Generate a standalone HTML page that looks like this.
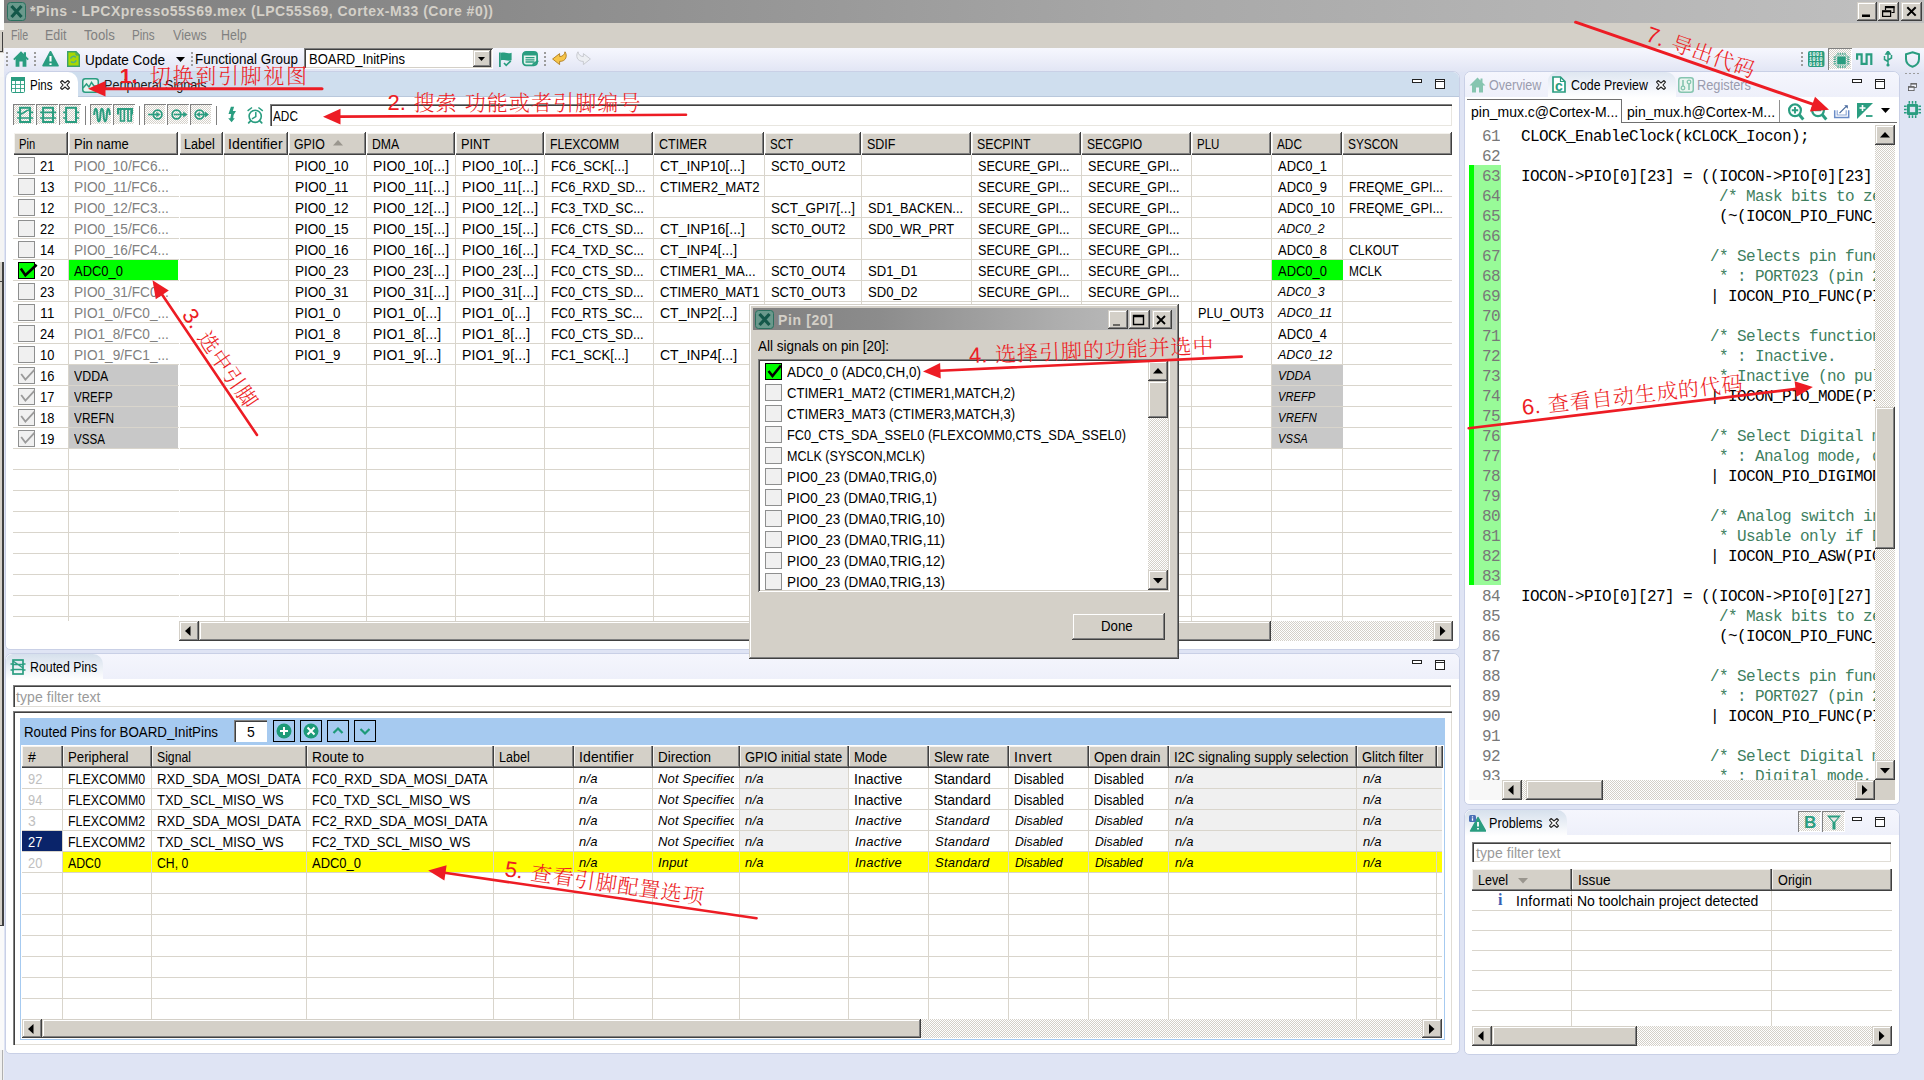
<!DOCTYPE html>
<html lang="zh"><head><meta charset="utf-8"><title>Pins - LPCXpresso55S69.mex</title>
<style>
html,body{margin:0;padding:0}
body{width:1924px;height:1080px;overflow:hidden;background:#dfe4f4;position:relative;font-family:"Liberation Sans","Noto Sans CJK SC",sans-serif;font-size:14px;color:#000}
div,span,svg{position:absolute;box-sizing:border-box}
.t{white-space:pre;line-height:16px}
.m{white-space:pre;font-family:"Liberation Mono",monospace;font-size:16px;letter-spacing:-0.6px;line-height:20px}
.hd{background:#d4d0c8;box-shadow:inset -1px -1px 0 #404040,inset -2px -2px 0 #808080,inset 1px 1px 0 #f4f2ee}
.btn{background:#d4d0c8;box-shadow:inset -1px -1px 0 #404040,inset 1px 1px 0 #d4d0c8,inset -2px -2px 0 #808080,inset 2px 2px 0 #fff}
.trk{background:repeating-conic-gradient(#fff 0% 25%,#d4d0c8 0% 50%) 0 0/2px 2px}
.sunk{box-shadow:inset 1px 1px 0 #808080,inset -1px -1px 0 #fff,inset 2px 2px 0 #404040,inset -2px -2px 0 #d4d0c8;background:#fff}
.cb{width:16px;height:16px;background:#f0f0f0;border:1px solid #8e8f8f}
.red{color:#ed1c24;font-family:"Liberation Sans","Noto Serif CJK SC",serif;white-space:pre}
</style></head>
<body>
<div style="left:0px;top:0px;width:4px;height:1080px;background:#ececec"></div>
<div style="left:0px;top:0px;width:4px;height:30px;background:#fff"></div>
<div style="left:0px;top:30px;width:4px;height:23px;background:#d4d0c8"></div>
<div style="left:2px;top:32px;width:1px;height:19px;background:#404040"></div>
<div style="left:0px;top:51px;width:3px;height:1px;background:#404040"></div>
<div style="left:0px;top:53px;width:4px;height:24px;background:#f6f6f6"></div>
<div style="left:0px;top:77px;width:4px;height:185px;background:#f4f4f4"></div>
<div style="left:0px;top:262px;width:4px;height:664px;background:#d4d0c8"></div>
<div style="left:2px;top:262px;width:2px;height:664px;background:#404040"></div>
<div style="left:0px;top:281px;width:4px;height:1px;background:#404040"></div>
<div style="left:0px;top:925px;width:4px;height:1px;background:#404040"></div>
<div style="left:0px;top:926px;width:4px;height:124px;background:#fafafa"></div>
<div style="left:0px;top:1050px;width:4px;height:30px;background:#f0f0f0"></div>
<div style="left:2px;top:1050px;width:1px;height:30px;background:#b0b0b0"></div>
<div style="left:4px;top:0px;width:1920px;height:23px;background:linear-gradient(to right,#808080 0%,#8a8a8a 25%,#a8a8a8 60%,#c0c0c0 100%)"></div>
<svg style="left:7px;top:2px" width="19" height="19" viewBox="0 0 19 19"><rect x="0.5" y="0.5" width="18" height="18" rx="3" fill="#6a998c" stroke="#2b705f"/><path d="M4.5 4 L14.5 15 M14.5 4 L4.5 15" stroke="#14584a" stroke-width="3.2" fill="none"/></svg>
<span class="t" style="left:30px;top:3px;color:#d4d0c8;font-weight:bold;letter-spacing:0.502px;">*Pins - LPCXpresso55S69.mex (LPC55S69, Cortex-M33 (Core #0))</span>
<div class="btn" style="left:1857px;top:2px;width:20px;height:19px;"></div>
<div class="btn" style="left:1878px;top:2px;width:21px;height:19px;"></div>
<div class="btn" style="left:1901px;top:2px;width:21px;height:19px;"></div>
<svg style="left:1857px;top:2px" width="66" height="19" viewBox="1857 2 66 19"><rect x="1862" y="14.5" width="8" height="2.5" fill="#000"/><path d="M1885.5 10V6.5h8.5v6h-2.5" stroke="#000" fill="none" stroke-width="1.2"/><path d="M1885 7.3h9.5" stroke="#000" stroke-width="1.8"/><rect x="1882.6" y="11" width="8" height="5.4" stroke="#000" fill="none" stroke-width="1.2"/><path d="M1882 11.4h9.2" stroke="#000" stroke-width="1.8"/><path d="M1907.3 7.2l8.4 8.4M1915.7 7.2l-8.4 8.4" stroke="#000" stroke-width="2" fill="none"/></svg>
<div style="left:4px;top:23px;width:1920px;height:25px;background:#d4d0c8"></div>
<span class="t" style="left:11px;top:27px;color:#808080;transform-origin:0 50%;transform:scaleX(0.7577);">File</span>
<span class="t" style="left:45px;top:27px;color:#808080;transform-origin:0 50%;transform:scaleX(0.8867);">Edit</span>
<span class="t" style="left:84px;top:27px;color:#808080;transform-origin:0 50%;transform:scaleX(0.9429);">Tools</span>
<span class="t" style="left:132px;top:27px;color:#808080;transform-origin:0 50%;transform:scaleX(0.8331);">Pins</span>
<span class="t" style="left:173px;top:27px;color:#808080;transform-origin:0 50%;transform:scaleX(0.9081);">Views</span>
<span class="t" style="left:221px;top:27px;color:#808080;transform-origin:0 50%;transform:scaleX(0.8890);">Help</span>
<div style="left:4px;top:48px;width:1920px;height:24px;background:linear-gradient(to bottom,#f6f7fe 0%,#eceef9 50%,#e1e5f4 100%)"></div>
<div style="left:6px;top:52px;width:2px;height:16px;background:repeating-linear-gradient(to bottom,#9c9c9c 0 2px,transparent 2px 4px)"></div>
<div style="left:34px;top:52px;width:2px;height:16px;background:repeating-linear-gradient(to bottom,#9c9c9c 0 2px,transparent 2px 4px)"></div>
<div style="left:191px;top:52px;width:2px;height:16px;background:repeating-linear-gradient(to bottom,#9c9c9c 0 2px,transparent 2px 4px)"></div>
<div style="left:1801px;top:52px;width:2px;height:16px;background:repeating-linear-gradient(to bottom,#9c9c9c 0 2px,transparent 2px 4px)"></div>
<span class="t" style="left:85px;top:52px;transform-origin:0 50%;transform:scaleX(0.9697);">Update Code</span>
<svg style="left:176px;top:57px" width="10" height="6"><path d="M0 0h9l-4.5 5z" fill="#000"/></svg>
<span class="t" style="left:195px;top:51px;transform-origin:0 50%;transform:scaleX(0.9593);">Functional Group</span>
<div class="sunk" style="left:304px;top:48px;width:189px;height:21px;"></div>
<span class="t" style="left:309px;top:51px;transform-origin:0 50%;transform:scaleX(0.9275);">BOARD_InitPins</span>
<div class="btn" style="left:473px;top:50px;width:18px;height:17px;"></div>
<svg style="left:478px;top:57px" width="8" height="5"><path d="M0 0h7l-3.5 4z" fill="#000"/></svg>
<svg style="left:13px;top:51px" width="16" height="16" viewBox="0 0 16 16"><path d="M8 0.3 L0.2 8 L1.4 9.2 L2.6 8 V15.8 H6.4 V10.5 H9.6 V15.8 H13.4 V8 L14.6 9.2 L15.8 8 L13 5.2 V1.3 H10.8 V3.1Z" fill="#2a9d80"/></svg>
<svg style="left:42px;top:51px" width="17" height="16" viewBox="0 0 17 16"><path d="M8.5 1 L15.8 14.6 H1.2Z" fill="#2a9d80" stroke="#2a9d80" stroke-width="2" stroke-linejoin="round"/><path d="M8.5 5v5.4M8.5 12.2v1.9" stroke="#fff" stroke-width="2.1"/></svg>
<svg style="left:67px;top:51px" width="13" height="16" viewBox="0 0 13 16"><path d="M0.7 0.7h8.3l3.3 3.3v11.3h-11.6z" fill="#a8d800" stroke="#3aa06e" stroke-width="1.4"/><path d="M9 0.7v3.3h3.3" fill="none" stroke="#3aa06e" stroke-width="1"/><path d="M3.6 7.6a3 3 0 0 1 5.2-1.2M9.2 9.2a3 3 0 0 1-5.2 1.2" stroke="#4fae86" stroke-width="1.5" fill="none"/></svg>
<svg style="left:499px;top:52px" width="13" height="15" viewBox="0 0 13 15"><path d="M0 0.5h1.8v14.5h-1.8z" fill="#2a9d80"/><path d="M1.8 1 C5 -0.3,8 2.3,12.6 0.8 V8.2 C8 9.7,5 7.1,1.8 8.4Z" fill="#2a9d80"/><path d="M5 11 L7.2 13.3 L11.8 8.8" stroke="#2a9d80" stroke-width="1.7" fill="none"/></svg>
<svg style="left:522px;top:51px" width="17" height="16" viewBox="0 0 17 16"><rect x="0.9" y="0.9" width="14.2" height="13.4" rx="3.2" fill="#e6f3ee" stroke="#2a9d80" stroke-width="1.8"/><rect x="1" y="1" width="14" height="3.4" rx="1.5" fill="#2a9d80"/><path d="M3.5 6.6h9M3.5 8.8h9M3.5 11h9" stroke="#2a9d80" stroke-width="1.3"/><path d="M9.5 15.2l1.2-2.8 5-3.6 1 1.6-5 3.8z" fill="#2a9d80"/></svg>
<div style="left:544px;top:52px;width:2px;height:16px;background:repeating-linear-gradient(to bottom,#9c9c9c 0 2px,transparent 2px 4px)"></div>
<svg style="left:552px;top:51px" width="16" height="15" viewBox="0 0 16 15"><path d="M0.6 8 L7.6 2.6 V5.6 C10.8 5.4,12.6 3.6,13 0.8 C15.6 4.6,14.2 10.6,7.6 10.4 V13.6Z" fill="#f7c64a" stroke="#b07c1c" stroke-width="0.9" stroke-linejoin="round"/></svg>
<svg style="left:575px;top:51px" width="16" height="15" viewBox="0 0 16 15"><path d="M15.4 8 L8.4 2.6 V5.6 C5.2 5.4,3.4 3.6,3 0.8 C0.4 4.6,1.8 10.6,8.4 10.4 V13.6Z" fill="#eceef2" stroke="#c4c6cc" stroke-width="0.9" stroke-linejoin="round"/></svg>
<div style="left:5px;top:71px;width:1455px;height:579px;background:#fff;border:1px solid #c9d0e6;border-radius:7px 7px 5px 5px;overflow:hidden"><div style="left:0;top:0;width:1455px;height:25px;background:#cfdeee;border-bottom:1px solid #b9c8dc"></div><div style="left:0px;top:0px;width:72px;height:26px;background:#fff;border-radius:7px 10px 0 0"></div></div>
<svg style="left:11px;top:77px" width="14" height="16" viewBox="0 0 14 16"><rect x="0.5" y="0.5" width="13" height="15" rx="1" fill="#fff" stroke="#2a9d80"/><rect x="0" y="0" width="14" height="4" fill="#2a9d80"/><path d="M0.5 7.5h13M0.5 11.5h13M4.5 4v12M9.5 4v12" stroke="#2a9d80" stroke-width="1" fill="none" opacity=".85"/></svg>
<span class="t" style="left:30px;top:77px;transform-origin:0 50%;transform:scaleX(0.8257);">Pins</span>
<svg style="left:60px;top:80px" width="10" height="10" viewBox="0 0 10 10"><path d="M2.1 0.5 L5 3 L7.9 0.5 L9.5 2.1 L7 5 L9.5 7.9 L7.9 9.5 L5 7 L2.1 9.5 L0.5 7.9 L3 5 L0.5 2.1Z" fill="#fff" stroke="#222" stroke-width="1.1"/></svg>
<svg style="left:82px;top:78px" width="17" height="15" viewBox="0 0 17 15"><rect x="0.75" y="0.75" width="15.5" height="13.5" rx="2.5" fill="#e8f3ee" stroke="#2a9d80" stroke-width="1.5"/><path d="M1 10 L4.5 6 L7 9 L9.5 4.5 L12 8 L16 8" stroke="#2a9d80" stroke-width="1.5" fill="none"/></svg>
<span class="t" style="left:104px;top:77px;color:#202020;transform-origin:0 50%;transform:scaleX(0.9021);">Peripheral Signals</span>
<svg style="left:1412px;top:78px" width="40" height="14" viewBox="0 0 40 14"><rect x="0.5" y="1.5" width="9" height="3" fill="#fff" stroke="#222"/><rect x="23.5" y="1.5" width="9" height="9" fill="#fff" stroke="#222"/><path d="M23 3.5h10" stroke="#222"/></svg>
<div class="trk" style="left:13px;top:104px;width:22px;height:21px;box-shadow:inset 1px 1px 0 #808080,inset -1px -1px 0 #fff"></div>
<div class="trk" style="left:36px;top:104px;width:22px;height:21px;box-shadow:inset 1px 1px 0 #808080,inset -1px -1px 0 #fff"></div>
<div class="trk" style="left:59px;top:104px;width:22px;height:21px;box-shadow:inset 1px 1px 0 #808080,inset -1px -1px 0 #fff"></div>
<div class="trk" style="left:90px;top:104px;width:22px;height:21px;box-shadow:inset 1px 1px 0 #808080,inset -1px -1px 0 #fff"></div>
<div class="trk" style="left:113px;top:104px;width:22px;height:21px;box-shadow:inset 1px 1px 0 #808080,inset -1px -1px 0 #fff"></div>
<div class="trk" style="left:144px;top:104px;width:22px;height:21px;box-shadow:inset 1px 1px 0 #808080,inset -1px -1px 0 #fff"></div>
<div class="trk" style="left:167px;top:104px;width:22px;height:21px;box-shadow:inset 1px 1px 0 #808080,inset -1px -1px 0 #fff"></div>
<div class="trk" style="left:190px;top:104px;width:22px;height:21px;box-shadow:inset 1px 1px 0 #808080,inset -1px -1px 0 #fff"></div>
<div style="left:85px;top:106px;width:1px;height:19px;background:#808080"></div>
<div style="left:139px;top:106px;width:1px;height:19px;background:#808080"></div>
<div style="left:216px;top:106px;width:1px;height:19px;background:#808080"></div>
<svg style="left:10px;top:100px" width="260" height="30" viewBox="10 100 260 30"><rect x="20.1" y="107.8" width="9.9" height="14.2" fill="none" stroke="#2a9d80" stroke-width="2"/><path d="M17.1 112.4h2.5M17.1 118h2.5M30.6 112.4h2.5M30.6 118h2.5" stroke="#2a9d80" stroke-width="1.6"/><path d="M20 118h10M20.3 114.2 C24 113.5,26 110,29.8 109.8" stroke="#2a9d80" stroke-width="1.6" fill="none"/><rect x="43.1" y="107.8" width="9.9" height="14.2" fill="none" stroke="#2a9d80" stroke-width="2"/><path d="M40.1 112.4h2.5M40.1 118h2.5M53.6 112.4h2.5M53.6 118h2.5" stroke="#2a9d80" stroke-width="1.6"/><path d="M43 112.4h10M43 118h10" stroke="#2a9d80" stroke-width="1.7"/><rect x="66.1" y="107.8" width="9.9" height="14.2" fill="none" stroke="#2a9d80" stroke-width="2"/><path d="M63.1 112.4h2.5M63.1 118h2.5M76.6 112.4h2.5M76.6 118h2.5" stroke="#2a9d80" stroke-width="1.6"/><path d="M94.2 115 C94.6 106.5,97 106.5,97.35 115 C97.7 123.5,100.1 123.5,100.4 115 C100.7 106.5,103.1 106.5,103.6 115 C104 123.5,106.4 123.5,106.8 115 C107.2 106.5,109.4 106.5,109.8 115" stroke="#2a9d80" stroke-width="2" fill="none"/><path d="M117 108h16v6.5h-2.2v-4.5h-11.6v4.5h-2.2z" fill="#2a9d80"/><path d="M120.6 109.5V121h3.7V109.5M128 109.5V121h3.2V110" stroke="#2a9d80" stroke-width="1.7" fill="none"/><circle cx="157.6" cy="114.5" r="4.3" fill="none" stroke="#2a9d80" stroke-width="1.8"/><path d="M148.1 114.5h9" stroke="#2a9d80" stroke-width="1.6"/><path d="M156.3 111.7l4 2.8l-4 2.8z" fill="#2a9d80"/><circle cx="176.5" cy="114.5" r="4.3" fill="none" stroke="#2a9d80" stroke-width="1.8"/><path d="M174 114.5h10" stroke="#2a9d80" stroke-width="1.6"/><path d="M183.2 111.5l4.2 3l-4.2 3z" fill="#2a9d80"/><circle cx="199.5" cy="114.5" r="4.3" fill="none" stroke="#2a9d80" stroke-width="1.8"/><path d="M198.5 114.5h7" stroke="#2a9d80" stroke-width="1.6"/><path d="M199.9 111.9l-3.8 2.6l3.8 2.6zM204.9 111.5l4.1 3l-4.1 3z" fill="#2a9d80"/><path d="M230.9 106.8 L234.1 106.8 L232.8 111 L236 111 L233.6 115 L233.2 118.2 L234.8 118.2 L231.6 122.2 L228.2 118.2 L230.3 118.2 L231.2 114 L228.5 114 Z" fill="#2a9d80"/><circle cx="255.2" cy="116.3" r="6.1" fill="none" stroke="#2a9d80" stroke-width="1.6"/><path d="M247.6 110.8L252 107.5M258.4 107.5L262.8 110.8" stroke="#2a9d80" stroke-width="1.5" fill="none"/><path d="M255.8 112.4v4.2l-3.3 2" stroke="#2a9d80" stroke-width="1.5" fill="none" stroke-linecap="round"/><path d="M250.3 121.2l-1.6 1.6M260.1 121.2l1.6 1.6" stroke="#2a9d80" stroke-width="1.8" stroke-linecap="round"/></svg>
<div style="left:270px;top:104px;width:1182px;height:22px;box-shadow:inset 1px 1px 0 #808080,inset 2px 2px 0 #404040,inset -1px -1px 0 #e8e6e0;background:#fff"></div>
<span class="t" style="left:273px;top:108px;transform-origin:0 50%;transform:scaleX(0.8425);">ADC</span>
<div style="left:13px;top:175px;width:166px;height:1px;background:#d9d5cc"></div>
<div style="left:180px;top:175px;width:1272px;height:1px;background:#d9d5cc"></div>
<div style="left:13px;top:196px;width:166px;height:1px;background:#d9d5cc"></div>
<div style="left:180px;top:196px;width:1272px;height:1px;background:#d9d5cc"></div>
<div style="left:13px;top:217px;width:166px;height:1px;background:#d9d5cc"></div>
<div style="left:180px;top:217px;width:1272px;height:1px;background:#d9d5cc"></div>
<div style="left:13px;top:238px;width:166px;height:1px;background:#d9d5cc"></div>
<div style="left:180px;top:238px;width:1272px;height:1px;background:#d9d5cc"></div>
<div style="left:13px;top:259px;width:166px;height:1px;background:#d9d5cc"></div>
<div style="left:180px;top:259px;width:1272px;height:1px;background:#d9d5cc"></div>
<div style="left:13px;top:280px;width:166px;height:1px;background:#d9d5cc"></div>
<div style="left:180px;top:280px;width:1272px;height:1px;background:#d9d5cc"></div>
<div style="left:13px;top:301px;width:166px;height:1px;background:#d9d5cc"></div>
<div style="left:180px;top:301px;width:1272px;height:1px;background:#d9d5cc"></div>
<div style="left:13px;top:322px;width:166px;height:1px;background:#d9d5cc"></div>
<div style="left:180px;top:322px;width:1272px;height:1px;background:#d9d5cc"></div>
<div style="left:13px;top:343px;width:166px;height:1px;background:#d9d5cc"></div>
<div style="left:180px;top:343px;width:1272px;height:1px;background:#d9d5cc"></div>
<div style="left:13px;top:364px;width:166px;height:1px;background:#d9d5cc"></div>
<div style="left:180px;top:364px;width:1272px;height:1px;background:#d9d5cc"></div>
<div style="left:13px;top:385px;width:166px;height:1px;background:#d9d5cc"></div>
<div style="left:180px;top:385px;width:1272px;height:1px;background:#d9d5cc"></div>
<div style="left:13px;top:406px;width:166px;height:1px;background:#d9d5cc"></div>
<div style="left:180px;top:406px;width:1272px;height:1px;background:#d9d5cc"></div>
<div style="left:13px;top:427px;width:166px;height:1px;background:#d9d5cc"></div>
<div style="left:180px;top:427px;width:1272px;height:1px;background:#d9d5cc"></div>
<div style="left:13px;top:448px;width:166px;height:1px;background:#d9d5cc"></div>
<div style="left:180px;top:448px;width:1272px;height:1px;background:#d9d5cc"></div>
<div style="left:13px;top:469px;width:166px;height:1px;background:#d9d5cc"></div>
<div style="left:180px;top:469px;width:1272px;height:1px;background:#d9d5cc"></div>
<div style="left:13px;top:490px;width:166px;height:1px;background:#d9d5cc"></div>
<div style="left:180px;top:490px;width:1272px;height:1px;background:#d9d5cc"></div>
<div style="left:13px;top:511px;width:166px;height:1px;background:#d9d5cc"></div>
<div style="left:180px;top:511px;width:1272px;height:1px;background:#d9d5cc"></div>
<div style="left:13px;top:532px;width:166px;height:1px;background:#d9d5cc"></div>
<div style="left:180px;top:532px;width:1272px;height:1px;background:#d9d5cc"></div>
<div style="left:13px;top:553px;width:166px;height:1px;background:#d9d5cc"></div>
<div style="left:180px;top:553px;width:1272px;height:1px;background:#d9d5cc"></div>
<div style="left:13px;top:574px;width:166px;height:1px;background:#d9d5cc"></div>
<div style="left:180px;top:574px;width:1272px;height:1px;background:#d9d5cc"></div>
<div style="left:13px;top:595px;width:166px;height:1px;background:#d9d5cc"></div>
<div style="left:180px;top:595px;width:1272px;height:1px;background:#d9d5cc"></div>
<div style="left:13px;top:616px;width:166px;height:1px;background:#d9d5cc"></div>
<div style="left:180px;top:616px;width:1272px;height:1px;background:#d9d5cc"></div>
<div style="left:68px;top:155px;width:1px;height:466px;background:#d9d5cc"></div>
<div style="left:224px;top:155px;width:1px;height:466px;background:#d9d5cc"></div>
<div style="left:288px;top:155px;width:1px;height:466px;background:#d9d5cc"></div>
<div style="left:366px;top:155px;width:1px;height:466px;background:#d9d5cc"></div>
<div style="left:455px;top:155px;width:1px;height:466px;background:#d9d5cc"></div>
<div style="left:544px;top:155px;width:1px;height:466px;background:#d9d5cc"></div>
<div style="left:653px;top:155px;width:1px;height:466px;background:#d9d5cc"></div>
<div style="left:764px;top:155px;width:1px;height:466px;background:#d9d5cc"></div>
<div style="left:861px;top:155px;width:1px;height:466px;background:#d9d5cc"></div>
<div style="left:971px;top:155px;width:1px;height:466px;background:#d9d5cc"></div>
<div style="left:1081px;top:155px;width:1px;height:466px;background:#d9d5cc"></div>
<div style="left:1191px;top:155px;width:1px;height:466px;background:#d9d5cc"></div>
<div style="left:1271px;top:155px;width:1px;height:466px;background:#d9d5cc"></div>
<div style="left:1342px;top:155px;width:1px;height:466px;background:#d9d5cc"></div>
<div class="hd" style="left:14px;top:133px;width:54px;height:22px;"></div>
<div style="left:67px;top:132px;width:1px;height:1px;background:#404040"></div>
<span class="t" style="left:19px;top:136px;transform-origin:0 50%;transform:scaleX(0.7976);">Pin</span>
<div class="hd" style="left:69px;top:133px;width:109px;height:22px;"></div>
<div style="left:177px;top:132px;width:1px;height:1px;background:#404040"></div>
<span class="t" style="left:74px;top:136px;transform-origin:0 50%;transform:scaleX(0.9257);">Pin name</span>
<div class="hd" style="left:180px;top:133px;width:43px;height:22px;"></div>
<div style="left:222px;top:132px;width:1px;height:1px;background:#404040"></div>
<span class="t" style="left:184px;top:136px;transform-origin:0 50%;transform:scaleX(0.8974);">Label</span>
<div class="hd" style="left:224px;top:133px;width:64px;height:22px;"></div>
<div style="left:287px;top:132px;width:1px;height:1px;background:#404040"></div>
<span class="t" style="left:228px;top:136px;letter-spacing:0.103px;">Identifier</span>
<div class="hd" style="left:289px;top:133px;width:77px;height:22px;"></div>
<div style="left:365px;top:132px;width:1px;height:1px;background:#404040"></div>
<span class="t" style="left:294px;top:136px;transform-origin:0 50%;transform:scaleX(0.8813);">GPIO</span>
<div class="hd" style="left:367px;top:133px;width:88px;height:22px;"></div>
<div style="left:454px;top:132px;width:1px;height:1px;background:#404040"></div>
<span class="t" style="left:372px;top:136px;transform-origin:0 50%;transform:scaleX(0.8754);">DMA</span>
<div class="hd" style="left:456px;top:133px;width:88px;height:22px;"></div>
<div style="left:543px;top:132px;width:1px;height:1px;background:#404040"></div>
<span class="t" style="left:461px;top:136px;transform-origin:0 50%;transform:scaleX(0.9124);">PINT</span>
<div class="hd" style="left:545px;top:133px;width:108px;height:22px;"></div>
<div style="left:652px;top:132px;width:1px;height:1px;background:#404040"></div>
<span class="t" style="left:550px;top:136px;transform-origin:0 50%;transform:scaleX(0.8714);">FLEXCOMM</span>
<div class="hd" style="left:654px;top:133px;width:110px;height:22px;"></div>
<div style="left:763px;top:132px;width:1px;height:1px;background:#404040"></div>
<span class="t" style="left:659px;top:136px;transform-origin:0 50%;transform:scaleX(0.8940);">CTIMER</span>
<div class="hd" style="left:765px;top:133px;width:96px;height:22px;"></div>
<div style="left:860px;top:132px;width:1px;height:1px;background:#404040"></div>
<span class="t" style="left:770px;top:136px;transform-origin:0 50%;transform:scaleX(0.8186);">SCT</span>
<div class="hd" style="left:862px;top:133px;width:109px;height:22px;"></div>
<div style="left:970px;top:132px;width:1px;height:1px;background:#404040"></div>
<span class="t" style="left:867px;top:136px;transform-origin:0 50%;transform:scaleX(0.8920);">SDIF</span>
<div class="hd" style="left:972px;top:133px;width:109px;height:22px;"></div>
<div style="left:1080px;top:132px;width:1px;height:1px;background:#404040"></div>
<span class="t" style="left:977px;top:136px;transform-origin:0 50%;transform:scaleX(0.8805);">SECPINT</span>
<div class="hd" style="left:1082px;top:133px;width:109px;height:22px;"></div>
<div style="left:1190px;top:132px;width:1px;height:1px;background:#404040"></div>
<span class="t" style="left:1087px;top:136px;transform-origin:0 50%;transform:scaleX(0.8650);">SECGPIO</span>
<div class="hd" style="left:1192px;top:133px;width:79px;height:22px;"></div>
<div style="left:1270px;top:132px;width:1px;height:1px;background:#404040"></div>
<span class="t" style="left:1197px;top:136px;transform-origin:0 50%;transform:scaleX(0.8234);">PLU</span>
<div class="hd" style="left:1272px;top:133px;width:70px;height:22px;"></div>
<div style="left:1341px;top:132px;width:1px;height:1px;background:#404040"></div>
<span class="t" style="left:1277px;top:136px;transform-origin:0 50%;transform:scaleX(0.8425);">ADC</span>
<div class="hd" style="left:1343px;top:133px;width:109px;height:22px;"></div>
<div style="left:1451px;top:132px;width:1px;height:1px;background:#404040"></div>
<span class="t" style="left:1348px;top:136px;transform-origin:0 50%;transform:scaleX(0.8485);">SYSCON</span>
<svg style="left:333px;top:140px" width="10" height="6"><path d="M5 0l5 5.5h-10z" fill="#9a968e"/></svg>
<div style="left:18px;top:157px;width:17px;height:17px;background:#f0f0f0;border:1px solid #8e8f8f"></div>
<span class="t" style="left:40px;top:158px;transform-origin:0 50%;transform:scaleX(0.9176);">21</span>
<span class="t" style="left:74px;top:158px;color:#808080;transform-origin:0 50%;transform:scaleX(0.9751);">PIO0_10/FC6...</span>
<span class="t" style="left:295px;top:158px;transform-origin:0 50%;transform:scaleX(0.9678);">PIO0_10</span>
<span class="t" style="left:373px;top:158px;letter-spacing:0.123px;">PIO0_10[...]</span>
<span class="t" style="left:462px;top:158px;letter-spacing:0.123px;">PIO0_10[...]</span>
<span class="t" style="left:551px;top:158px;transform-origin:0 50%;transform:scaleX(0.9389);">FC6_SCK[...]</span>
<span class="t" style="left:660px;top:158px;">CT_INP10[...]</span>
<span class="t" style="left:771px;top:158px;transform-origin:0 50%;transform:scaleX(0.9209);">SCT0_OUT2</span>
<span class="t" style="left:978px;top:158px;transform-origin:0 50%;transform:scaleX(0.8975);">SECURE_GPI...</span>
<span class="t" style="left:1088px;top:158px;transform-origin:0 50%;transform:scaleX(0.8975);">SECURE_GPI...</span>
<span class="t" style="left:1278px;top:158px;transform-origin:0 50%;transform:scaleX(0.9248);">ADC0_1</span>
<div style="left:18px;top:178px;width:17px;height:17px;background:#f0f0f0;border:1px solid #8e8f8f"></div>
<span class="t" style="left:40px;top:179px;transform-origin:0 50%;transform:scaleX(0.9176);">13</span>
<span class="t" style="left:74px;top:179px;color:#808080;transform-origin:0 50%;transform:scaleX(0.9852);">PIO0_11/FC6...</span>
<span class="t" style="left:295px;top:179px;transform-origin:0 50%;transform:scaleX(0.9856);">PIO0_11</span>
<span class="t" style="left:373px;top:179px;letter-spacing:0.226px;">PIO0_11[...]</span>
<span class="t" style="left:462px;top:179px;letter-spacing:0.226px;">PIO0_11[...]</span>
<span class="t" style="left:551px;top:179px;transform-origin:0 50%;transform:scaleX(0.9205);">FC6_RXD_SD...</span>
<span class="t" style="left:660px;top:179px;transform-origin:0 50%;transform:scaleX(0.9438);">CTIMER2_MAT2</span>
<span class="t" style="left:978px;top:179px;transform-origin:0 50%;transform:scaleX(0.8975);">SECURE_GPI...</span>
<span class="t" style="left:1088px;top:179px;transform-origin:0 50%;transform:scaleX(0.8975);">SECURE_GPI...</span>
<span class="t" style="left:1278px;top:179px;transform-origin:0 50%;transform:scaleX(0.9248);">ADC0_9</span>
<span class="t" style="left:1349px;top:179px;transform-origin:0 50%;transform:scaleX(0.9089);">FREQME_GPI...</span>
<div style="left:18px;top:199px;width:17px;height:17px;background:#f0f0f0;border:1px solid #8e8f8f"></div>
<span class="t" style="left:40px;top:200px;transform-origin:0 50%;transform:scaleX(0.9176);">12</span>
<span class="t" style="left:74px;top:200px;color:#808080;transform-origin:0 50%;transform:scaleX(0.9751);">PIO0_12/FC3...</span>
<span class="t" style="left:295px;top:200px;transform-origin:0 50%;transform:scaleX(0.9678);">PIO0_12</span>
<span class="t" style="left:373px;top:200px;letter-spacing:0.123px;">PIO0_12[...]</span>
<span class="t" style="left:462px;top:200px;letter-spacing:0.123px;">PIO0_12[...]</span>
<span class="t" style="left:551px;top:200px;transform-origin:0 50%;transform:scaleX(0.9190);">FC3_TXD_SC...</span>
<span class="t" style="left:771px;top:200px;transform-origin:0 50%;transform:scaleX(0.9654);">SCT_GPI7[...]</span>
<span class="t" style="left:868px;top:200px;transform-origin:0 50%;transform:scaleX(0.9111);">SD1_BACKEN...</span>
<span class="t" style="left:978px;top:200px;transform-origin:0 50%;transform:scaleX(0.8975);">SECURE_GPI...</span>
<span class="t" style="left:1088px;top:200px;transform-origin:0 50%;transform:scaleX(0.8975);">SECURE_GPI...</span>
<span class="t" style="left:1278px;top:200px;transform-origin:0 50%;transform:scaleX(0.9368);">ADC0_10</span>
<span class="t" style="left:1349px;top:200px;transform-origin:0 50%;transform:scaleX(0.9089);">FREQME_GPI...</span>
<div style="left:18px;top:220px;width:17px;height:17px;background:#f0f0f0;border:1px solid #8e8f8f"></div>
<span class="t" style="left:40px;top:221px;transform-origin:0 50%;transform:scaleX(0.9176);">22</span>
<span class="t" style="left:74px;top:221px;color:#808080;transform-origin:0 50%;transform:scaleX(0.9751);">PIO0_15/FC6...</span>
<span class="t" style="left:295px;top:221px;transform-origin:0 50%;transform:scaleX(0.9678);">PIO0_15</span>
<span class="t" style="left:373px;top:221px;letter-spacing:0.123px;">PIO0_15[...]</span>
<span class="t" style="left:462px;top:221px;letter-spacing:0.123px;">PIO0_15[...]</span>
<span class="t" style="left:551px;top:221px;transform-origin:0 50%;transform:scaleX(0.9157);">FC6_CTS_SD...</span>
<span class="t" style="left:660px;top:221px;">CT_INP16[...]</span>
<span class="t" style="left:771px;top:221px;transform-origin:0 50%;transform:scaleX(0.9209);">SCT0_OUT2</span>
<span class="t" style="left:868px;top:221px;transform-origin:0 50%;transform:scaleX(0.9181);">SD0_WR_PRT</span>
<span class="t" style="left:978px;top:221px;transform-origin:0 50%;transform:scaleX(0.8975);">SECURE_GPI...</span>
<span class="t" style="left:1088px;top:221px;transform-origin:0 50%;transform:scaleX(0.8975);">SECURE_GPI...</span>
<span class="t" style="left:1278px;top:221px;font-size:13px;line-height:15px;font-style:italic;transform-origin:0 50%;transform:scaleX(0.9461);">ADC0_2</span>
<div style="left:18px;top:241px;width:17px;height:17px;background:#f0f0f0;border:1px solid #8e8f8f"></div>
<span class="t" style="left:40px;top:242px;transform-origin:0 50%;transform:scaleX(0.9176);">14</span>
<span class="t" style="left:74px;top:242px;color:#808080;transform-origin:0 50%;transform:scaleX(0.9751);">PIO0_16/FC4...</span>
<span class="t" style="left:295px;top:242px;transform-origin:0 50%;transform:scaleX(0.9678);">PIO0_16</span>
<span class="t" style="left:373px;top:242px;letter-spacing:0.123px;">PIO0_16[...]</span>
<span class="t" style="left:462px;top:242px;letter-spacing:0.123px;">PIO0_16[...]</span>
<span class="t" style="left:551px;top:242px;transform-origin:0 50%;transform:scaleX(0.9190);">FC4_TXD_SC...</span>
<span class="t" style="left:660px;top:242px;">CT_INP4[...]</span>
<span class="t" style="left:978px;top:242px;transform-origin:0 50%;transform:scaleX(0.8975);">SECURE_GPI...</span>
<span class="t" style="left:1088px;top:242px;transform-origin:0 50%;transform:scaleX(0.8975);">SECURE_GPI...</span>
<span class="t" style="left:1278px;top:242px;transform-origin:0 50%;transform:scaleX(0.9248);">ADC0_8</span>
<span class="t" style="left:1349px;top:242px;transform-origin:0 50%;transform:scaleX(0.8741);">CLKOUT</span>
<div style="left:18px;top:262px;width:17px;height:17px;background:#00ff00;border:1px solid #000"></div>
<svg style="left:18px;top:260px;overflow:visible" width="21" height="20" viewBox="0 0 21 20"><path d="M2.8 8.6 L7.4 15.2 L18.6 4.8" stroke="#000" stroke-width="2.6" fill="none"/></svg>
<span class="t" style="left:40px;top:263px;transform-origin:0 50%;transform:scaleX(0.9176);">20</span>
<div style="left:69px;top:260px;width:109px;height:20px;background:#00ff00"></div>
<span class="t" style="left:74px;top:263px;transform-origin:0 50%;transform:scaleX(0.9248);">ADC0_0</span>
<span class="t" style="left:295px;top:263px;transform-origin:0 50%;transform:scaleX(0.9678);">PIO0_23</span>
<span class="t" style="left:373px;top:263px;letter-spacing:0.123px;">PIO0_23[...]</span>
<span class="t" style="left:462px;top:263px;letter-spacing:0.123px;">PIO0_23[...]</span>
<span class="t" style="left:551px;top:263px;transform-origin:0 50%;transform:scaleX(0.9157);">FC0_CTS_SD...</span>
<span class="t" style="left:660px;top:263px;transform-origin:0 50%;transform:scaleX(0.9386);">CTIMER1_MA...</span>
<span class="t" style="left:771px;top:263px;transform-origin:0 50%;transform:scaleX(0.9209);">SCT0_OUT4</span>
<span class="t" style="left:868px;top:263px;transform-origin:0 50%;transform:scaleX(0.9342);">SD1_D1</span>
<span class="t" style="left:978px;top:263px;transform-origin:0 50%;transform:scaleX(0.8975);">SECURE_GPI...</span>
<span class="t" style="left:1088px;top:263px;transform-origin:0 50%;transform:scaleX(0.8975);">SECURE_GPI...</span>
<div style="left:1272px;top:260px;width:71px;height:20px;background:#00ff00"></div>
<span class="t" style="left:1278px;top:263px;transform-origin:0 50%;transform:scaleX(0.9248);">ADC0_0</span>
<span class="t" style="left:1349px;top:263px;transform-origin:0 50%;transform:scaleX(0.8482);">MCLK</span>
<div style="left:18px;top:283px;width:17px;height:17px;background:#f0f0f0;border:1px solid #8e8f8f"></div>
<span class="t" style="left:40px;top:284px;transform-origin:0 50%;transform:scaleX(0.9176);">23</span>
<span class="t" style="left:74px;top:284px;color:#808080;transform-origin:0 50%;transform:scaleX(0.9751);">PIO0_31/FC0...</span>
<span class="t" style="left:295px;top:284px;transform-origin:0 50%;transform:scaleX(0.9678);">PIO0_31</span>
<span class="t" style="left:373px;top:284px;letter-spacing:0.123px;">PIO0_31[...]</span>
<span class="t" style="left:462px;top:284px;letter-spacing:0.123px;">PIO0_31[...]</span>
<span class="t" style="left:551px;top:284px;transform-origin:0 50%;transform:scaleX(0.9157);">FC0_CTS_SD...</span>
<span class="t" style="left:660px;top:284px;transform-origin:0 50%;transform:scaleX(0.9438);">CTIMER0_MAT1</span>
<span class="t" style="left:771px;top:284px;transform-origin:0 50%;transform:scaleX(0.9209);">SCT0_OUT3</span>
<span class="t" style="left:868px;top:284px;transform-origin:0 50%;transform:scaleX(0.9342);">SD0_D2</span>
<span class="t" style="left:978px;top:284px;transform-origin:0 50%;transform:scaleX(0.8975);">SECURE_GPI...</span>
<span class="t" style="left:1088px;top:284px;transform-origin:0 50%;transform:scaleX(0.8975);">SECURE_GPI...</span>
<span class="t" style="left:1278px;top:284px;font-size:13px;line-height:15px;font-style:italic;transform-origin:0 50%;transform:scaleX(0.9461);">ADC0_3</span>
<div style="left:18px;top:304px;width:17px;height:17px;background:#f0f0f0;border:1px solid #8e8f8f"></div>
<span class="t" style="left:40px;top:305px;transform-origin:0 50%;transform:scaleX(0.9888);">11</span>
<span class="t" style="left:74px;top:305px;color:#808080;transform-origin:0 50%;transform:scaleX(0.9751);">PIO1_0/FC0_...</span>
<span class="t" style="left:295px;top:305px;transform-origin:0 50%;transform:scaleX(0.9570);">PIO1_0</span>
<span class="t" style="left:373px;top:305px;letter-spacing:0.122px;">PIO1_0[...]</span>
<span class="t" style="left:462px;top:305px;letter-spacing:0.122px;">PIO1_0[...]</span>
<span class="t" style="left:551px;top:305px;transform-origin:0 50%;transform:scaleX(0.9101);">FC0_RTS_SC...</span>
<span class="t" style="left:660px;top:305px;">CT_INP2[...]</span>
<span class="t" style="left:771px;top:305px;transform-origin:0 50%;transform:scaleX(0.9209);">SCT0_OUT1</span>
<span class="t" style="left:868px;top:305px;transform-origin:0 50%;transform:scaleX(0.9342);">SD0_D0</span>
<span class="t" style="left:978px;top:305px;transform-origin:0 50%;transform:scaleX(0.8975);">SECURE_GPI...</span>
<span class="t" style="left:1088px;top:305px;transform-origin:0 50%;transform:scaleX(0.8975);">SECURE_GPI...</span>
<span class="t" style="left:1198px;top:305px;transform-origin:0 50%;transform:scaleX(0.9117);">PLU_OUT3</span>
<span class="t" style="left:1278px;top:305px;font-size:13px;line-height:15px;font-style:italic;transform-origin:0 50%;transform:scaleX(0.9785);">ADC0_11</span>
<div style="left:18px;top:325px;width:17px;height:17px;background:#f0f0f0;border:1px solid #8e8f8f"></div>
<span class="t" style="left:40px;top:326px;transform-origin:0 50%;transform:scaleX(0.9176);">24</span>
<span class="t" style="left:74px;top:326px;color:#808080;transform-origin:0 50%;transform:scaleX(0.9751);">PIO1_8/FC0_...</span>
<span class="t" style="left:295px;top:326px;transform-origin:0 50%;transform:scaleX(0.9570);">PIO1_8</span>
<span class="t" style="left:373px;top:326px;letter-spacing:0.122px;">PIO1_8[...]</span>
<span class="t" style="left:462px;top:326px;letter-spacing:0.122px;">PIO1_8[...]</span>
<span class="t" style="left:551px;top:326px;transform-origin:0 50%;transform:scaleX(0.9157);">FC0_CTS_SD...</span>
<span class="t" style="left:771px;top:326px;transform-origin:0 50%;transform:scaleX(0.9209);">SCT0_OUT1</span>
<span class="t" style="left:868px;top:326px;transform-origin:0 50%;transform:scaleX(0.9342);">SD0_D3</span>
<span class="t" style="left:978px;top:326px;transform-origin:0 50%;transform:scaleX(0.8975);">SECURE_GPI...</span>
<span class="t" style="left:1088px;top:326px;transform-origin:0 50%;transform:scaleX(0.8975);">SECURE_GPI...</span>
<span class="t" style="left:1278px;top:326px;transform-origin:0 50%;transform:scaleX(0.9248);">ADC0_4</span>
<div style="left:18px;top:346px;width:17px;height:17px;background:#f0f0f0;border:1px solid #8e8f8f"></div>
<span class="t" style="left:40px;top:347px;transform-origin:0 50%;transform:scaleX(0.9176);">10</span>
<span class="t" style="left:74px;top:347px;color:#808080;transform-origin:0 50%;transform:scaleX(0.9751);">PIO1_9/FC1_...</span>
<span class="t" style="left:295px;top:347px;transform-origin:0 50%;transform:scaleX(0.9570);">PIO1_9</span>
<span class="t" style="left:373px;top:347px;letter-spacing:0.122px;">PIO1_9[...]</span>
<span class="t" style="left:462px;top:347px;letter-spacing:0.122px;">PIO1_9[...]</span>
<span class="t" style="left:551px;top:347px;transform-origin:0 50%;transform:scaleX(0.9389);">FC1_SCK[...]</span>
<span class="t" style="left:660px;top:347px;">CT_INP4[...]</span>
<span class="t" style="left:771px;top:347px;transform-origin:0 50%;transform:scaleX(0.9209);">SCT0_OUT2</span>
<span class="t" style="left:978px;top:347px;transform-origin:0 50%;transform:scaleX(0.8975);">SECURE_GPI...</span>
<span class="t" style="left:1088px;top:347px;transform-origin:0 50%;transform:scaleX(0.8975);">SECURE_GPI...</span>
<span class="t" style="left:1278px;top:347px;font-size:13px;line-height:15px;font-style:italic;transform-origin:0 50%;transform:scaleX(0.9614);">ADC0_12</span>
<div style="left:18px;top:367px;width:17px;height:17px;background:#f0f0f0;border:1px solid #8e8f8f"></div>
<svg style="left:18px;top:365px;overflow:visible" width="21" height="20" viewBox="0 0 21 20"><path d="M3.2 9 L7.4 14.6 L16.6 4.6" stroke="#9a9a9a" stroke-width="1.8" fill="none"/></svg>
<span class="t" style="left:40px;top:368px;transform-origin:0 50%;transform:scaleX(0.9176);">16</span>
<div style="left:69px;top:365px;width:109px;height:20px;background:#c8c8c8"></div>
<span class="t" style="left:74px;top:368px;transform-origin:0 50%;transform:scaleX(0.8825);">VDDA</span>
<div style="left:1272px;top:365px;width:71px;height:20px;background:#c8c8c8"></div>
<span class="t" style="left:1278px;top:368px;font-size:13px;line-height:15px;font-style:italic;transform-origin:0 50%;transform:scaleX(0.9164);">VDDA</span>
<div style="left:18px;top:388px;width:17px;height:17px;background:#f0f0f0;border:1px solid #8e8f8f"></div>
<svg style="left:18px;top:386px;overflow:visible" width="21" height="20" viewBox="0 0 21 20"><path d="M3.2 9 L7.4 14.6 L16.6 4.6" stroke="#9a9a9a" stroke-width="1.8" fill="none"/></svg>
<span class="t" style="left:40px;top:389px;transform-origin:0 50%;transform:scaleX(0.9176);">17</span>
<div style="left:69px;top:386px;width:109px;height:20px;background:#c8c8c8"></div>
<span class="t" style="left:74px;top:389px;transform-origin:0 50%;transform:scaleX(0.8275);">VREFP</span>
<div style="left:1272px;top:386px;width:71px;height:20px;background:#c8c8c8"></div>
<span class="t" style="left:1278px;top:389px;font-size:13px;line-height:15px;font-style:italic;transform-origin:0 50%;transform:scaleX(0.8584);">VREFP</span>
<div style="left:18px;top:409px;width:17px;height:17px;background:#f0f0f0;border:1px solid #8e8f8f"></div>
<svg style="left:18px;top:407px;overflow:visible" width="21" height="20" viewBox="0 0 21 20"><path d="M3.2 9 L7.4 14.6 L16.6 4.6" stroke="#9a9a9a" stroke-width="1.8" fill="none"/></svg>
<span class="t" style="left:40px;top:410px;transform-origin:0 50%;transform:scaleX(0.9176);">18</span>
<div style="left:69px;top:407px;width:109px;height:20px;background:#c8c8c8"></div>
<span class="t" style="left:74px;top:410px;transform-origin:0 50%;transform:scaleX(0.8468);">VREFN</span>
<div style="left:1272px;top:407px;width:71px;height:20px;background:#c8c8c8"></div>
<span class="t" style="left:1278px;top:410px;font-size:13px;line-height:15px;font-style:italic;transform-origin:0 50%;transform:scaleX(0.8796);">VREFN</span>
<div style="left:18px;top:430px;width:17px;height:17px;background:#f0f0f0;border:1px solid #8e8f8f"></div>
<svg style="left:18px;top:428px;overflow:visible" width="21" height="20" viewBox="0 0 21 20"><path d="M3.2 9 L7.4 14.6 L16.6 4.6" stroke="#9a9a9a" stroke-width="1.8" fill="none"/></svg>
<span class="t" style="left:40px;top:431px;transform-origin:0 50%;transform:scaleX(0.9176);">19</span>
<div style="left:69px;top:428px;width:109px;height:20px;background:#c8c8c8"></div>
<span class="t" style="left:74px;top:431px;transform-origin:0 50%;transform:scaleX(0.8266);">VSSA</span>
<div style="left:1272px;top:428px;width:71px;height:20px;background:#c8c8c8"></div>
<span class="t" style="left:1278px;top:431px;font-size:13px;line-height:15px;font-style:italic;transform-origin:0 50%;transform:scaleX(0.8579);">VSSA</span>
<div class="trk" style="left:179px;top:621px;width:1274px;height:20px;"></div>
<div class="btn" style="left:179px;top:621px;width:20px;height:20px;"></div>
<div class="btn" style="left:1433px;top:621px;width:20px;height:20px;"></div>
<div class="btn" style="left:199px;top:621px;width:1072px;height:20px;"></div>
<svg style="left:185px;top:626px" width="6" height="10"><path d="M5.5 0v10l-5.5-5z" fill="#000"/></svg>
<svg style="left:1440px;top:626px" width="6" height="10"><path d="M0 0v10l5.5-5z" fill="#000"/></svg>
<div style="left:5px;top:653px;width:1455px;height:401px;background:#fff;border:1px solid #c9d0e6;border-radius:7px 7px 5px 5px;overflow:hidden"><div style="left:0;top:0;width:1455px;height:25px;background:linear-gradient(to bottom,#f5f6fd,#eef0fa)"></div><div style="left:0px;top:0px;width:97px;height:26px;background:linear-gradient(to bottom,#d6e0ec 0%,#e6ecf4 40%,#fff 100%);border-radius:7px 10px 0 0"></div></div>
<svg style="left:10px;top:659px" width="16" height="16" viewBox="0 0 16 16"><rect x="3" y="1" width="10" height="14" fill="none" stroke="#2a9d80" stroke-width="1.7"/><path d="M0.5 5h2.5M0.5 11h2.5M13 5h2.5M13 11h2.5" stroke="#2a9d80" stroke-width="1.4"/><path d="M3 5.5h10M3 10.5h10M3 2 L13 9" stroke="#2a9d80" stroke-width="1.4"/></svg>
<span class="t" style="left:30px;top:659px;transform-origin:0 50%;transform:scaleX(0.8813);">Routed Pins</span>
<svg style="left:1412px;top:659px" width="40" height="14" viewBox="0 0 40 14"><rect x="0.5" y="1.5" width="9" height="3" fill="#fff" stroke="#222"/><rect x="23.5" y="1.5" width="9" height="9" fill="#fff" stroke="#222"/><path d="M23 3.5h10" stroke="#222"/></svg>
<div style="left:13px;top:685px;width:1438px;height:22px;box-shadow:inset 1px 1px 0 #808080,inset 2px 2px 0 #404040,inset -1px -1px 0 #e0ddd6;background:#fff"></div>
<span class="t" style="left:16px;top:689px;color:#9a9a9a;letter-spacing:0.082px;">type filter text</span>
<div style="left:13px;top:711px;width:1439px;height:334px;box-shadow:inset 1px 1px 0 #808080,inset 2px 2px 0 #404040,inset -1px -1px 0 #e0ddd6;background:#fff"></div>
<div style="left:20px;top:718px;width:1425px;height:322px;background:#fff;border-left:1px solid #a6caf0;border-right:1px solid #a6caf0;border-bottom:1px solid #a6caf0"></div>
<div style="left:20px;top:718px;width:1425px;height:27px;background:#a6caf0"></div>
<span class="t" style="left:24px;top:724px;transform-origin:0 50%;transform:scaleX(0.9516);">Routed Pins for BOARD_InitPins</span>
<div style="left:234px;top:720px;width:33px;height:22px;box-shadow:inset 1px 1px 0 #808080,inset 2px 2px 0 #404040,inset -1px -1px 0 #fff;background:#fff"></div>
<span class="t" style="left:247px;top:724px;">5</span>
<svg style="left:273px;top:720px" width="22" height="22" viewBox="0 0 22 22"><rect x="0.5" y="0.5" width="21" height="21" fill="none" stroke="#000"/><circle cx="11" cy="11" r="7.5" fill="#1d9a78"/><path d="M11 7v8M7 11h8" stroke="#fff" stroke-width="2"/></svg>
<svg style="left:300px;top:720px" width="22" height="22" viewBox="0 0 22 22"><rect x="0.5" y="0.5" width="21" height="21" fill="none" stroke="#000"/><circle cx="11" cy="11" r="7.5" fill="#1d9a78"/><path d="M7.5 7.5l7 7M14.5 7.5l-7 7" stroke="#fff" stroke-width="2"/></svg>
<svg style="left:327px;top:720px" width="22" height="22" viewBox="0 0 22 22"><rect x="0.5" y="0.5" width="21" height="21" fill="none" stroke="#000"/><path d="M6.5 13 L11 8.5 L15.5 13" stroke="#1d9a78" stroke-width="2.2" fill="none"/></svg>
<svg style="left:354px;top:720px" width="22" height="22" viewBox="0 0 22 22"><rect x="0.5" y="0.5" width="21" height="21" fill="none" stroke="#000"/><path d="M6.5 9 L11 13.5 L15.5 9" stroke="#1d9a78" stroke-width="2.2" fill="none"/></svg>
<div style="left:22px;top:788px;width:1420px;height:1px;background:#d9d5cc"></div>
<div style="left:22px;top:809px;width:1420px;height:1px;background:#d9d5cc"></div>
<div style="left:22px;top:830px;width:1420px;height:1px;background:#d9d5cc"></div>
<div style="left:22px;top:851px;width:1420px;height:1px;background:#d9d5cc"></div>
<div style="left:22px;top:872px;width:1420px;height:1px;background:#d9d5cc"></div>
<div style="left:22px;top:893px;width:1420px;height:1px;background:#d9d5cc"></div>
<div style="left:22px;top:914px;width:1420px;height:1px;background:#d9d5cc"></div>
<div style="left:22px;top:935px;width:1420px;height:1px;background:#d9d5cc"></div>
<div style="left:22px;top:956px;width:1420px;height:1px;background:#d9d5cc"></div>
<div style="left:22px;top:977px;width:1420px;height:1px;background:#d9d5cc"></div>
<div style="left:22px;top:998px;width:1420px;height:1px;background:#d9d5cc"></div>
<div style="left:62px;top:768px;width:1px;height:251px;background:#d9d5cc"></div>
<div style="left:151px;top:768px;width:1px;height:251px;background:#d9d5cc"></div>
<div style="left:306px;top:768px;width:1px;height:251px;background:#d9d5cc"></div>
<div style="left:493px;top:768px;width:1px;height:251px;background:#d9d5cc"></div>
<div style="left:573px;top:768px;width:1px;height:251px;background:#d9d5cc"></div>
<div style="left:652px;top:768px;width:1px;height:251px;background:#d9d5cc"></div>
<div style="left:739px;top:768px;width:1px;height:251px;background:#d9d5cc"></div>
<div style="left:848px;top:768px;width:1px;height:251px;background:#d9d5cc"></div>
<div style="left:928px;top:768px;width:1px;height:251px;background:#d9d5cc"></div>
<div style="left:1008px;top:768px;width:1px;height:251px;background:#d9d5cc"></div>
<div style="left:1088px;top:768px;width:1px;height:251px;background:#d9d5cc"></div>
<div style="left:1168px;top:768px;width:1px;height:251px;background:#d9d5cc"></div>
<div style="left:1356px;top:768px;width:1px;height:251px;background:#d9d5cc"></div>
<div style="left:1436px;top:768px;width:1px;height:251px;background:#d9d5cc"></div>
<div class="hd" style="left:22px;top:746px;width:41px;height:22px;"></div>
<span class="t" style="left:28px;top:749px;">#</span>
<div class="hd" style="left:63px;top:746px;width:89px;height:22px;"></div>
<span class="t" style="left:68px;top:749px;transform-origin:0 50%;transform:scaleX(0.9454);">Peripheral</span>
<div class="hd" style="left:152px;top:746px;width:155px;height:22px;"></div>
<span class="t" style="left:157px;top:749px;transform-origin:0 50%;transform:scaleX(0.8717);">Signal</span>
<div class="hd" style="left:307px;top:746px;width:187px;height:22px;"></div>
<span class="t" style="left:312px;top:749px;transform-origin:0 50%;transform:scaleX(0.9826);">Route to</span>
<div class="hd" style="left:494px;top:746px;width:80px;height:22px;"></div>
<span class="t" style="left:499px;top:749px;transform-origin:0 50%;transform:scaleX(0.8974);">Label</span>
<div class="hd" style="left:574px;top:746px;width:79px;height:22px;"></div>
<span class="t" style="left:579px;top:749px;letter-spacing:0.103px;">Identifier</span>
<div class="hd" style="left:653px;top:746px;width:87px;height:22px;"></div>
<span class="t" style="left:658px;top:749px;transform-origin:0 50%;transform:scaleX(0.9589);">Direction</span>
<div class="hd" style="left:740px;top:746px;width:109px;height:22px;"></div>
<span class="t" style="left:745px;top:749px;transform-origin:0 50%;transform:scaleX(0.9247);">GPIO initial state</span>
<div class="hd" style="left:849px;top:746px;width:80px;height:22px;"></div>
<span class="t" style="left:854px;top:749px;transform-origin:0 50%;transform:scaleX(0.9420);">Mode</span>
<div class="hd" style="left:929px;top:746px;width:80px;height:22px;"></div>
<span class="t" style="left:934px;top:749px;transform-origin:0 50%;transform:scaleX(0.9513);">Slew rate</span>
<div class="hd" style="left:1009px;top:746px;width:80px;height:22px;"></div>
<span class="t" style="left:1014px;top:749px;letter-spacing:0.503px;">Invert</span>
<div class="hd" style="left:1089px;top:746px;width:80px;height:22px;"></div>
<span class="t" style="left:1094px;top:749px;transform-origin:0 50%;transform:scaleX(0.9590);">Open drain</span>
<div class="hd" style="left:1169px;top:746px;width:188px;height:22px;"></div>
<span class="t" style="left:1174px;top:749px;transform-origin:0 50%;transform:scaleX(0.9457);">I2C signaling supply selection</span>
<div class="hd" style="left:1357px;top:746px;width:80px;height:22px;"></div>
<span class="t" style="left:1362px;top:749px;transform-origin:0 50%;transform:scaleX(0.9285);">Glitch filter</span>
<div class="hd" style="left:1437px;top:746px;width:6px;height:22px;"></div>
<div style="left:740px;top:768px;width:108px;height:20px;background:#f0f0f0"></div>
<div style="left:1169px;top:768px;width:187px;height:20px;background:#f0f0f0"></div>
<div style="left:1357px;top:768px;width:85px;height:20px;background:#f0f0f0"></div>
<span class="t" style="left:28px;top:771px;color:#c0c0c0;transform-origin:0 50%;transform:scaleX(0.9176);">92</span>
<span class="t" style="left:68px;top:771px;transform-origin:0 50%;transform:scaleX(0.8858);">FLEXCOMM0</span>
<span class="t" style="left:157px;top:771px;transform-origin:0 50%;transform:scaleX(0.9406);">RXD_SDA_MOSI_DATA</span>
<span class="t" style="left:312px;top:771px;transform-origin:0 50%;transform:scaleX(0.9389);">FC0_RXD_SDA_MOSI_DATA</span>
<span class="t" style="left:579px;top:771px;font-size:13px;line-height:15px;font-style:italic;letter-spacing:0.265px;">n/a</span>
<span class="t" style="left:658px;top:771px;font-size:13px;line-height:15px;font-style:italic;letter-spacing:0.188px;width:76.0px;overflow:hidden;">Not Specified</span>
<span class="t" style="left:745px;top:771px;font-size:13px;line-height:15px;font-style:italic;letter-spacing:0.265px;">n/a</span>
<span class="t" style="left:854px;top:771px;">Inactive</span>
<span class="t" style="left:934px;top:771px;">Standard</span>
<span class="t" style="left:1014px;top:771px;transform-origin:0 50%;transform:scaleX(0.9137);">Disabled</span>
<span class="t" style="left:1094px;top:771px;transform-origin:0 50%;transform:scaleX(0.9137);">Disabled</span>
<span class="t" style="left:1175px;top:771px;font-size:13px;line-height:15px;font-style:italic;letter-spacing:0.265px;">n/a</span>
<span class="t" style="left:1363px;top:771px;font-size:13px;line-height:15px;font-style:italic;letter-spacing:0.265px;">n/a</span>
<div style="left:740px;top:789px;width:108px;height:20px;background:#f0f0f0"></div>
<div style="left:1169px;top:789px;width:187px;height:20px;background:#f0f0f0"></div>
<div style="left:1357px;top:789px;width:85px;height:20px;background:#f0f0f0"></div>
<span class="t" style="left:28px;top:792px;color:#c0c0c0;transform-origin:0 50%;transform:scaleX(0.9176);">94</span>
<span class="t" style="left:68px;top:792px;transform-origin:0 50%;transform:scaleX(0.8858);">FLEXCOMM0</span>
<span class="t" style="left:157px;top:792px;transform-origin:0 50%;transform:scaleX(0.9241);">TXD_SCL_MISO_WS</span>
<span class="t" style="left:312px;top:792px;transform-origin:0 50%;transform:scaleX(0.9256);">FC0_TXD_SCL_MISO_WS</span>
<span class="t" style="left:579px;top:792px;font-size:13px;line-height:15px;font-style:italic;letter-spacing:0.265px;">n/a</span>
<span class="t" style="left:658px;top:792px;font-size:13px;line-height:15px;font-style:italic;letter-spacing:0.188px;width:76.0px;overflow:hidden;">Not Specified</span>
<span class="t" style="left:745px;top:792px;font-size:13px;line-height:15px;font-style:italic;letter-spacing:0.265px;">n/a</span>
<span class="t" style="left:854px;top:792px;">Inactive</span>
<span class="t" style="left:934px;top:792px;">Standard</span>
<span class="t" style="left:1014px;top:792px;transform-origin:0 50%;transform:scaleX(0.9137);">Disabled</span>
<span class="t" style="left:1094px;top:792px;transform-origin:0 50%;transform:scaleX(0.9137);">Disabled</span>
<span class="t" style="left:1175px;top:792px;font-size:13px;line-height:15px;font-style:italic;letter-spacing:0.265px;">n/a</span>
<span class="t" style="left:1363px;top:792px;font-size:13px;line-height:15px;font-style:italic;letter-spacing:0.265px;">n/a</span>
<div style="left:740px;top:810px;width:108px;height:20px;background:#f0f0f0"></div>
<div style="left:1169px;top:810px;width:187px;height:20px;background:#f0f0f0"></div>
<div style="left:1357px;top:810px;width:85px;height:20px;background:#f0f0f0"></div>
<span class="t" style="left:28px;top:813px;color:#c0c0c0;">3</span>
<span class="t" style="left:68px;top:813px;transform-origin:0 50%;transform:scaleX(0.8858);">FLEXCOMM2</span>
<span class="t" style="left:157px;top:813px;transform-origin:0 50%;transform:scaleX(0.9406);">RXD_SDA_MOSI_DATA</span>
<span class="t" style="left:312px;top:813px;transform-origin:0 50%;transform:scaleX(0.9389);">FC2_RXD_SDA_MOSI_DATA</span>
<span class="t" style="left:579px;top:813px;font-size:13px;line-height:15px;font-style:italic;letter-spacing:0.265px;">n/a</span>
<span class="t" style="left:658px;top:813px;font-size:13px;line-height:15px;font-style:italic;letter-spacing:0.188px;width:76.0px;overflow:hidden;">Not Specified</span>
<span class="t" style="left:745px;top:813px;font-size:13px;line-height:15px;font-style:italic;letter-spacing:0.265px;">n/a</span>
<span class="t" style="left:855px;top:813px;font-size:13px;line-height:15px;font-style:italic;letter-spacing:0.260px;">Inactive</span>
<span class="t" style="left:935px;top:813px;font-size:13px;line-height:15px;font-style:italic;letter-spacing:0.226px;">Standard</span>
<span class="t" style="left:1015px;top:813px;font-size:13px;line-height:15px;font-style:italic;transform-origin:0 50%;transform:scaleX(0.9423);">Disabled</span>
<span class="t" style="left:1095px;top:813px;font-size:13px;line-height:15px;font-style:italic;transform-origin:0 50%;transform:scaleX(0.9423);">Disabled</span>
<span class="t" style="left:1175px;top:813px;font-size:13px;line-height:15px;font-style:italic;letter-spacing:0.265px;">n/a</span>
<span class="t" style="left:1363px;top:813px;font-size:13px;line-height:15px;font-style:italic;letter-spacing:0.265px;">n/a</span>
<div style="left:740px;top:831px;width:108px;height:20px;background:#f0f0f0"></div>
<div style="left:1169px;top:831px;width:187px;height:20px;background:#f0f0f0"></div>
<div style="left:1357px;top:831px;width:85px;height:20px;background:#f0f0f0"></div>
<div style="left:22px;top:831px;width:40px;height:20px;background:#0a246a"></div>
<span class="t" style="left:28px;top:834px;color:#fff;transform-origin:0 50%;transform:scaleX(0.9176);">27</span>
<span class="t" style="left:68px;top:834px;transform-origin:0 50%;transform:scaleX(0.8858);">FLEXCOMM2</span>
<span class="t" style="left:157px;top:834px;transform-origin:0 50%;transform:scaleX(0.9241);">TXD_SCL_MISO_WS</span>
<span class="t" style="left:312px;top:834px;transform-origin:0 50%;transform:scaleX(0.9256);">FC2_TXD_SCL_MISO_WS</span>
<span class="t" style="left:579px;top:834px;font-size:13px;line-height:15px;font-style:italic;letter-spacing:0.265px;">n/a</span>
<span class="t" style="left:658px;top:834px;font-size:13px;line-height:15px;font-style:italic;letter-spacing:0.188px;width:76.0px;overflow:hidden;">Not Specified</span>
<span class="t" style="left:745px;top:834px;font-size:13px;line-height:15px;font-style:italic;letter-spacing:0.265px;">n/a</span>
<span class="t" style="left:855px;top:834px;font-size:13px;line-height:15px;font-style:italic;letter-spacing:0.260px;">Inactive</span>
<span class="t" style="left:935px;top:834px;font-size:13px;line-height:15px;font-style:italic;letter-spacing:0.226px;">Standard</span>
<span class="t" style="left:1015px;top:834px;font-size:13px;line-height:15px;font-style:italic;transform-origin:0 50%;transform:scaleX(0.9423);">Disabled</span>
<span class="t" style="left:1095px;top:834px;font-size:13px;line-height:15px;font-style:italic;transform-origin:0 50%;transform:scaleX(0.9423);">Disabled</span>
<span class="t" style="left:1175px;top:834px;font-size:13px;line-height:15px;font-style:italic;letter-spacing:0.265px;">n/a</span>
<span class="t" style="left:1363px;top:834px;font-size:13px;line-height:15px;font-style:italic;letter-spacing:0.265px;">n/a</span>
<div style="left:63px;top:852px;width:1379px;height:20px;background:#ffff00"></div>
<div style="left:151px;top:852px;width:1px;height:20px;background:#dcd9c0"></div>
<div style="left:306px;top:852px;width:1px;height:20px;background:#dcd9c0"></div>
<div style="left:493px;top:852px;width:1px;height:20px;background:#dcd9c0"></div>
<div style="left:573px;top:852px;width:1px;height:20px;background:#dcd9c0"></div>
<div style="left:652px;top:852px;width:1px;height:20px;background:#dcd9c0"></div>
<div style="left:739px;top:852px;width:1px;height:20px;background:#dcd9c0"></div>
<div style="left:848px;top:852px;width:1px;height:20px;background:#dcd9c0"></div>
<div style="left:928px;top:852px;width:1px;height:20px;background:#dcd9c0"></div>
<div style="left:1008px;top:852px;width:1px;height:20px;background:#dcd9c0"></div>
<div style="left:1088px;top:852px;width:1px;height:20px;background:#dcd9c0"></div>
<div style="left:1168px;top:852px;width:1px;height:20px;background:#dcd9c0"></div>
<div style="left:1356px;top:852px;width:1px;height:20px;background:#dcd9c0"></div>
<div style="left:1436px;top:852px;width:1px;height:20px;background:#dcd9c0"></div>
<span class="t" style="left:28px;top:855px;color:#c0c0c0;transform-origin:0 50%;transform:scaleX(0.9176);">20</span>
<span class="t" style="left:68px;top:855px;transform-origin:0 50%;transform:scaleX(0.8794);">ADC0</span>
<span class="t" style="left:157px;top:855px;transform-origin:0 50%;transform:scaleX(0.8724);">CH, 0</span>
<span class="t" style="left:312px;top:855px;transform-origin:0 50%;transform:scaleX(0.9248);">ADC0_0</span>
<span class="t" style="left:579px;top:855px;font-size:13px;line-height:15px;font-style:italic;letter-spacing:0.265px;">n/a</span>
<span class="t" style="left:658px;top:855px;font-size:13px;line-height:15px;font-style:italic;letter-spacing:0.156px;width:76.0px;overflow:hidden;">Input</span>
<span class="t" style="left:745px;top:855px;font-size:13px;line-height:15px;font-style:italic;letter-spacing:0.265px;">n/a</span>
<span class="t" style="left:855px;top:855px;font-size:13px;line-height:15px;font-style:italic;letter-spacing:0.260px;">Inactive</span>
<span class="t" style="left:935px;top:855px;font-size:13px;line-height:15px;font-style:italic;letter-spacing:0.226px;">Standard</span>
<span class="t" style="left:1015px;top:855px;font-size:13px;line-height:15px;font-style:italic;transform-origin:0 50%;transform:scaleX(0.9423);">Disabled</span>
<span class="t" style="left:1095px;top:855px;font-size:13px;line-height:15px;font-style:italic;transform-origin:0 50%;transform:scaleX(0.9423);">Disabled</span>
<span class="t" style="left:1175px;top:855px;font-size:13px;line-height:15px;font-style:italic;letter-spacing:0.265px;">n/a</span>
<span class="t" style="left:1363px;top:855px;font-size:13px;line-height:15px;font-style:italic;letter-spacing:0.265px;">n/a</span>
<div class="trk" style="left:22px;top:1019px;width:1420px;height:19px;"></div>
<div class="btn" style="left:22px;top:1019px;width:20px;height:19px;"></div>
<div class="btn" style="left:1422px;top:1019px;width:20px;height:19px;"></div>
<div class="btn" style="left:42px;top:1019px;width:879px;height:19px;"></div>
<svg style="left:28px;top:1024px" width="6" height="10"><path d="M5.5 0v10l-5.5-5z" fill="#000"/></svg>
<svg style="left:1429px;top:1024px" width="6" height="10"><path d="M0 0v10l5.5-5z" fill="#000"/></svg>
<svg style="left:1808px;top:51px" width="17" height="16" viewBox="0 0 17 16"><rect x="0" y="0" width="16.5" height="16" rx="2" fill="#2a9d80"/></svg>
<span class="t" style="left:1809px;top:52px;font-size:5px;line-height:6px;color:#fff;font-weight:bold;transform-origin:0 50%;transform:scaleX(0.9748);font-family:&quot;Liberation Mono&quot;,monospace;letter-spacing:0.6px;line-height:6px">1001</span>
<span class="t" style="left:1809px;top:57px;font-size:5px;line-height:6px;color:#fff;font-weight:bold;transform-origin:0 50%;transform:scaleX(0.9748);font-family:&quot;Liberation Mono&quot;,monospace;letter-spacing:0.6px;line-height:6px">1010</span>
<span class="t" style="left:1809px;top:62px;font-size:5px;line-height:6px;color:#fff;font-weight:bold;transform-origin:0 50%;transform:scaleX(0.9748);font-family:&quot;Liberation Mono&quot;,monospace;letter-spacing:0.6px;line-height:6px">0101</span>
<div class="trk" style="left:1828px;top:48px;width:24px;height:22px;box-shadow:inset 1px 1px 0 #808080,inset -1px -1px 0 #fff"></div>
<svg style="left:1833px;top:52px" width="17" height="17" viewBox="0 0 17 17"><rect x="4.2" y="4.4" width="8.6" height="8" fill="#2a9d80"/><rect x="2.9" y="3.1" width="11.2" height="10.6" fill="none" stroke="#2a9d80" stroke-width="0.9" stroke-dasharray="1.4 0.9" opacity=".75"/><path d="M5 0.8v2M7.3 0.8v2M9.7 0.8v2M12 0.8v2M5 14v2M7.3 14v2M9.7 14v2M12 14v2M0.6 5.2h2M0.6 7.4h2M0.6 9.6h2M0.6 11.8h2M14.4 5.2h2M14.4 7.4h2M14.4 9.6h2M14.4 11.8h2" stroke="#2a9d80" stroke-width="1.2" opacity=".85"/></svg>
<svg style="left:1855px;top:52px" width="19" height="15" viewBox="1855 52 19 15"><path d="M1857.1 59.8V54.4H1861.6V63.9H1866.6V54.4H1871.3V64.9" stroke="#2a9d80" stroke-width="2.2" fill="none"/></svg>
<svg style="left:1883px;top:51px" width="10" height="16" viewBox="0 0 10 16"><path d="M5 1.5v13M5 0l-2 3h4zM1.5 5v3.5l3.5 2M8.5 4v3l-3.5 2" stroke="#2a9d80" stroke-width="1.5" fill="none"/><circle cx="5" cy="14" r="1.6" fill="#2a9d80"/></svg>
<svg style="left:1904px;top:51px" width="17" height="17" viewBox="0 0 17 17"><path d="M8.5 1.2 L15 3.2 V8 C15 12,11.5 14.8,8.5 15.8 C5.5 14.8,2 12,2 8 V3.2Z" stroke="#2a9d80" stroke-width="2" fill="none"/></svg>
<div style="left:1905px;top:73px;width:16px;height:1px;background:repeating-linear-gradient(to right,#9c9c9c 0 2px,transparent 2px 4px)"></div>
<svg style="left:1908px;top:83px" width="9" height="8" viewBox="0 0 11 10"><rect x="3.5" y="0.5" width="7" height="5" fill="#f0f2fa" stroke="#555"/><path d="M3.5 1.5h7" stroke="#555"/><rect x="0.5" y="4.5" width="7" height="5" fill="#f0f2fa" stroke="#555"/><path d="M0.5 5.5h7" stroke="#555"/></svg>
<svg style="left:1904px;top:101px" width="17" height="17" viewBox="0 0 16 16"><rect x="2.8" y="2.8" width="10.4" height="10.4" rx="1" fill="#2a9d80"/><rect x="5.5" y="5.5" width="5" height="5" fill="#dfe4f4"/><path d="M5 0v2.5M8 0v2.5M11 0v2.5M5 13.5v2.5M8 13.5v2.5M11 13.5v2.5M0 5h2.5M0 8h2.5M0 11h2.5M13.5 5h2.5M13.5 8h2.5M13.5 11h2.5" stroke="#2a9d80" stroke-width="1.4"/></svg>
<div style="left:1464px;top:71px;width:436px;height:734px;background:#fff;border:1px solid #c9d0e6;border-radius:7px 7px 5px 5px;overflow:hidden"><div style="left:0;top:0;width:436px;height:25px;background:linear-gradient(to bottom,#f5f6fd,#eef0fa)"></div><div style="left:83px;top:0px;width:128px;height:26px;background:linear-gradient(to bottom,#dfe7f1 0%,#edf1f8 45%,#fff 100%);border-radius:9px 10px 0 0"></div></div>
<svg style="left:1469px;top:77px" width="17" height="16" viewBox="0 0 17 16"><path d="M8.5 0.5 L0.5 8.5 h2.5 v7 h4 v-5 h3 v5 h4 v-7 h2.5 L13.5 5.5 V1.5 h-2 v2z" fill="#86c5b0"/></svg>
<span class="t" style="left:1489px;top:77px;color:#9a9cae;transform-origin:0 50%;transform:scaleX(0.8974);">Overview</span>
<svg style="left:1552px;top:76px" width="14" height="17" viewBox="0 0 14 17"><path d="M1 1h7.5l4.5 4.5v10.5h-12z" fill="#fff" stroke="#2a9d80" stroke-width="1.7"/><path d="M8.5 1v4.5h4.5" fill="none" stroke="#2a9d80" stroke-width="1.2"/></svg>
<span class="t" style="left:1555px;top:78px;color:#2a9d80;font-weight:bold;">c</span>
<span class="t" style="left:1571px;top:77px;transform-origin:0 50%;transform:scaleX(0.8825);">Code Preview</span>
<svg style="left:1656px;top:80px" width="10" height="10" viewBox="0 0 10 10"><path d="M2.1 0.5 L5 3 L7.9 0.5 L9.5 2.1 L7 5 L9.5 7.9 L7.9 9.5 L5 7 L2.1 9.5 L0.5 7.9 L3 5 L0.5 2.1Z" fill="#fff" stroke="#222" stroke-width="1.1"/></svg>
<svg style="left:1678px;top:77px" width="16" height="16" viewBox="0 0 16 16"><rect x="0.75" y="0.75" width="14.5" height="14.5" rx="2.5" fill="#eaf5f0" stroke="#86c5b0" stroke-width="1.5"/><path d="M5 3v6M11 13v-6" stroke="#86c5b0" stroke-width="1.6"/><circle cx="5" cy="11" r="1.8" fill="none" stroke="#86c5b0" stroke-width="1.3"/><circle cx="11" cy="5" r="1.8" fill="none" stroke="#86c5b0" stroke-width="1.3"/></svg>
<span class="t" style="left:1697px;top:77px;color:#9a9cae;transform-origin:0 50%;transform:scaleX(0.9133);">Registers</span>
<svg style="left:1852px;top:78px" width="40" height="14" viewBox="0 0 40 14"><rect x="0.5" y="1.5" width="9" height="3" fill="#fff" stroke="#222"/><rect x="23.5" y="1.5" width="9" height="9" fill="#fff" stroke="#222"/><path d="M23 3.5h10" stroke="#222"/></svg>
<div style="left:1467px;top:99px;width:155px;height:1px;background:#707070"></div>
<div style="left:1622px;top:122px;width:275px;height:1px;background:#707070"></div>
<div style="left:1621px;top:100px;width:1px;height:23px;background:#707070"></div>
<div style="left:1779px;top:100px;width:1px;height:22px;background:#909090"></div>
<span class="t" style="left:1471px;top:104px;">pin_mux.c@Cortex-M...</span>
<span class="t" style="left:1627px;top:104px;">pin_mux.h@Cortex-M...</span>
<svg style="left:1786px;top:102px" width="66" height="20" viewBox="1786 102 66 20"><circle cx="1795" cy="110.3" r="5.9" fill="none" stroke="#2a9d80" stroke-width="2.2"/><path d="M1799.3 114.8l4 4.6" stroke="#2a9d80" stroke-width="3"/><path d="M1791.8 110.3h6.4M1795 107.1v6.4" stroke="#2a9d80" stroke-width="1.9"/><circle cx="1818" cy="110.3" r="5.9" fill="none" stroke="#2a9d80" stroke-width="2.2"/><path d="M1822.3 114.8l4 4.6" stroke="#2a9d80" stroke-width="3"/><path d="M1814.8 110.3h6.4" stroke="#2a9d80" stroke-width="1.9"/><path d="M1834.7 110.3v7.2h14v-7.2" stroke="#6a8cc7" stroke-width="1.5" fill="none"/><path d="M1837.2 110.3v4.7h9v-4.7" stroke="#8ea8d6" stroke-width="1.2" fill="none"/><path d="M1839.5 113.2L1846 106.6" stroke="#46689c" stroke-width="1.2"/><path d="M1844.2 105.2h3.6v3.6z" fill="#46689c"/></svg>
<svg style="left:1857px;top:103px" width="16" height="16" viewBox="0 0 16 16"><path d="M0 0h16L0 16z" fill="#2a9d80"/><path d="M2.5 5h6M5.5 2v6" stroke="#fff" stroke-width="1.6"/><path d="M9 13h6.5" stroke="#2a9d80" stroke-width="1.8"/></svg>
<svg style="left:1881px;top:108px" width="10" height="6"><path d="M0 0h9l-4.5 5z" fill="#000"/></svg>
<div style="left:1469px;top:125px;width:406px;height:655px;background:#fff;overflow:hidden"></div>
<div style="left:1469px;top:165px;width:5px;height:420px;background:#00ff00"></div>
<div style="left:1474px;top:165px;width:27px;height:420px;background:#98fb98"></div>
<span class="m" style="left:1482px;top:127px;color:#787878;height:18px;overflow:hidden">61</span>
<span class="m" style="left:1521px;top:127px;width:354px;height:18px;overflow:hidden;">CLOCK_EnableClock(kCLOCK_Iocon);</span>
<span class="m" style="left:1482px;top:147px;color:#787878;height:18px;overflow:hidden">62</span>
<span class="m" style="left:1482px;top:167px;color:#787878;height:18px;overflow:hidden">63</span>
<span class="m" style="left:1521px;top:167px;width:354px;height:18px;overflow:hidden;">IOCON-&gt;PIO[0][23] = ((IOCON-&gt;PIO[0][23] &amp;</span>
<span class="m" style="left:1482px;top:187px;color:#787878;height:18px;overflow:hidden">64</span>
<span class="m" style="left:1719px;top:187px;width:156px;height:18px;overflow:hidden;color:#3f7f5f">/* Mask bits to zero which are setting */</span>
<span class="m" style="left:1482px;top:207px;color:#787878;height:18px;overflow:hidden">65</span>
<span class="m" style="left:1719px;top:207px;width:156px;height:18px;overflow:hidden;">(~(IOCON_PIO_FUNC_MASK | IOCON_PIO_MODE_MASK | IOCON_PIO_DIGIMODE_MASK)))</span>
<span class="m" style="left:1482px;top:227px;color:#787878;height:18px;overflow:hidden">66</span>
<span class="m" style="left:1482px;top:247px;color:#787878;height:18px;overflow:hidden">67</span>
<span class="m" style="left:1710px;top:247px;width:165px;height:18px;overflow:hidden;color:#3f7f5f">/* Selects pin function.</span>
<span class="m" style="left:1482px;top:267px;color:#787878;height:18px;overflow:hidden">68</span>
<span class="m" style="left:1710px;top:267px;width:165px;height:18px;overflow:hidden;color:#3f7f5f"> * : PORT023 (pin 20) is configured as ADC0_0. */</span>
<span class="m" style="left:1482px;top:287px;color:#787878;height:18px;overflow:hidden">69</span>
<span class="m" style="left:1710px;top:287px;width:165px;height:18px;overflow:hidden;">| IOCON_PIO_FUNC(PIO0_23_FUNC_ALT0)</span>
<span class="m" style="left:1482px;top:307px;color:#787878;height:18px;overflow:hidden">70</span>
<span class="m" style="left:1482px;top:327px;color:#787878;height:18px;overflow:hidden">71</span>
<span class="m" style="left:1710px;top:327px;width:165px;height:18px;overflow:hidden;color:#3f7f5f">/* Selects function mode (on-chip pull-up/pull-down resistor control).</span>
<span class="m" style="left:1482px;top:347px;color:#787878;height:18px;overflow:hidden">72</span>
<span class="m" style="left:1710px;top:347px;width:165px;height:18px;overflow:hidden;color:#3f7f5f"> * : Inactive.</span>
<span class="m" style="left:1482px;top:367px;color:#787878;height:18px;overflow:hidden">73</span>
<span class="m" style="left:1710px;top:367px;width:165px;height:18px;overflow:hidden;color:#3f7f5f"> * Inactive (no pull-down/pull-up resistor enabled). */</span>
<span class="m" style="left:1482px;top:387px;color:#787878;height:18px;overflow:hidden">74</span>
<span class="m" style="left:1710px;top:387px;width:165px;height:18px;overflow:hidden;">| IOCON_PIO_MODE(PIO0_23_MODE_INACTIVE)</span>
<span class="m" style="left:1482px;top:407px;color:#787878;height:18px;overflow:hidden">75</span>
<span class="m" style="left:1482px;top:427px;color:#787878;height:18px;overflow:hidden">76</span>
<span class="m" style="left:1710px;top:427px;width:165px;height:18px;overflow:hidden;color:#3f7f5f">/* Select Digital mode.</span>
<span class="m" style="left:1482px;top:447px;color:#787878;height:18px;overflow:hidden">77</span>
<span class="m" style="left:1710px;top:447px;width:165px;height:18px;overflow:hidden;color:#3f7f5f"> * : Analog mode, digital input is disabled. */</span>
<span class="m" style="left:1482px;top:467px;color:#787878;height:18px;overflow:hidden">78</span>
<span class="m" style="left:1710px;top:467px;width:165px;height:18px;overflow:hidden;">| IOCON_PIO_DIGIMODE(PIO0_23_DIGIMODE_ANALOG)</span>
<span class="m" style="left:1482px;top:487px;color:#787878;height:18px;overflow:hidden">79</span>
<span class="m" style="left:1482px;top:507px;color:#787878;height:18px;overflow:hidden">80</span>
<span class="m" style="left:1710px;top:507px;width:165px;height:18px;overflow:hidden;color:#3f7f5f">/* Analog switch input control.</span>
<span class="m" style="left:1482px;top:527px;color:#787878;height:18px;overflow:hidden">81</span>
<span class="m" style="left:1710px;top:527px;width:165px;height:18px;overflow:hidden;color:#3f7f5f"> * Usable only if DIGIMODE = 0b0.</span>
<span class="m" style="left:1482px;top:547px;color:#787878;height:18px;overflow:hidden">82</span>
<span class="m" style="left:1710px;top:547px;width:165px;height:18px;overflow:hidden;">| IOCON_PIO_ASW(PIO0_23_ASW_VALUE1));</span>
<span class="m" style="left:1482px;top:567px;color:#787878;height:18px;overflow:hidden">83</span>
<span class="m" style="left:1482px;top:587px;color:#787878;height:18px;overflow:hidden">84</span>
<span class="m" style="left:1521px;top:587px;width:354px;height:18px;overflow:hidden;">IOCON-&gt;PIO[0][27] = ((IOCON-&gt;PIO[0][27] &amp;</span>
<span class="m" style="left:1482px;top:607px;color:#787878;height:18px;overflow:hidden">85</span>
<span class="m" style="left:1719px;top:607px;width:156px;height:18px;overflow:hidden;color:#3f7f5f">/* Mask bits to zero which are setting */</span>
<span class="m" style="left:1482px;top:627px;color:#787878;height:18px;overflow:hidden">86</span>
<span class="m" style="left:1719px;top:627px;width:156px;height:18px;overflow:hidden;">(~(IOCON_PIO_FUNC_MASK | IOCON_PIO_DIGIMODE_MASK)))</span>
<span class="m" style="left:1482px;top:647px;color:#787878;height:18px;overflow:hidden">87</span>
<span class="m" style="left:1482px;top:667px;color:#787878;height:18px;overflow:hidden">88</span>
<span class="m" style="left:1710px;top:667px;width:165px;height:18px;overflow:hidden;color:#3f7f5f">/* Selects pin function.</span>
<span class="m" style="left:1482px;top:687px;color:#787878;height:18px;overflow:hidden">89</span>
<span class="m" style="left:1710px;top:687px;width:165px;height:18px;overflow:hidden;color:#3f7f5f"> * : PORT027 (pin 27) is configured as FC2_TXD_SCL_MISO_WS. */</span>
<span class="m" style="left:1482px;top:707px;color:#787878;height:18px;overflow:hidden">90</span>
<span class="m" style="left:1710px;top:707px;width:165px;height:18px;overflow:hidden;">| IOCON_PIO_FUNC(PIO0_27_FUNC_ALT1)</span>
<span class="m" style="left:1482px;top:727px;color:#787878;height:18px;overflow:hidden">91</span>
<span class="m" style="left:1482px;top:747px;color:#787878;height:18px;overflow:hidden">92</span>
<span class="m" style="left:1710px;top:747px;width:165px;height:18px;overflow:hidden;color:#3f7f5f">/* Select Digital mode.</span>
<span class="m" style="left:1482px;top:767px;color:#787878;height:13px;overflow:hidden">93</span>
<span class="m" style="left:1710px;top:767px;width:165px;height:13px;overflow:hidden;color:#3f7f5f"> * : Digital mode, digital input is enabled. */</span>
<div class="trk" style="left:1875px;top:125px;width:20px;height:655px;"></div>
<div class="btn" style="left:1875px;top:125px;width:20px;height:20px;"></div>
<div class="btn" style="left:1875px;top:760px;width:20px;height:20px;"></div>
<div class="btn" style="left:1875px;top:407px;width:20px;height:142px;"></div>
<svg style="left:1880px;top:132px" width="10" height="6"><path d="M5 0l5 5.5h-10z" fill="#000"/></svg>
<svg style="left:1880px;top:768px" width="10" height="6"><path d="M0 0h10l-5 5.5z" fill="#000"/></svg>
<div style="left:1469px;top:780px;width:33px;height:20px;background:#f8f8f8"></div>
<div class="trk" style="left:1502px;top:780px;width:373px;height:20px;"></div>
<div class="btn" style="left:1502px;top:780px;width:20px;height:20px;"></div>
<div class="btn" style="left:1855px;top:780px;width:20px;height:20px;"></div>
<div class="btn" style="left:1526px;top:780px;width:77px;height:20px;"></div>
<div style="left:1875px;top:780px;width:20px;height:20px;background:#d4d0c8"></div>
<svg style="left:1508px;top:785px" width="6" height="10"><path d="M5.5 0v10l-5.5-5z" fill="#000"/></svg>
<svg style="left:1862px;top:785px" width="6" height="10"><path d="M0 0v10l5.5-5z" fill="#000"/></svg>
<div style="left:1464px;top:809px;width:436px;height:246px;background:#fff;border:1px solid #c9d0e6;border-radius:7px 7px 5px 5px;overflow:hidden"><div style="left:0;top:0;width:436px;height:25px;background:linear-gradient(to bottom,#f5f6fd,#eef0fa)"></div><div style="left:0px;top:0px;width:102px;height:26px;background:linear-gradient(to bottom,#d6e0ec 0%,#e6ecf4 40%,#fff 100%);border-radius:7px 10px 0 0"></div></div>
<svg style="left:1468.5px;top:815px" width="17" height="17" viewBox="0 0 17 17"><path d="M9 2.5 L16.5 16 H1.5Z" fill="#2a9d80" stroke="#2a9d80" stroke-linejoin="round" stroke-width="1.5"/><path d="M9 7v4.5M9 13v1.6" stroke="#fff" stroke-width="1.8"/><rect x="0" y="0" width="7" height="7" rx="1.5" fill="#4a6fb5"/><path d="M3.5 1.2v1.2M3.5 3.2v2.6" stroke="#fff" stroke-width="1.3"/></svg>
<span class="t" style="left:1489px;top:815px;transform-origin:0 50%;transform:scaleX(0.9032);">Problems</span>
<svg style="left:1549px;top:818px" width="10" height="10" viewBox="0 0 10 10"><path d="M2.1 0.5 L5 3 L7.9 0.5 L9.5 2.1 L7 5 L9.5 7.9 L7.9 9.5 L5 7 L2.1 9.5 L0.5 7.9 L3 5 L0.5 2.1Z" fill="#fff" stroke="#222" stroke-width="1.1"/></svg>
<div class="trk" style="left:1798px;top:811px;width:23px;height:21px;box-shadow:inset 1px 1px 0 #808080,inset -1px -1px 0 #fff"></div>
<div class="trk" style="left:1822px;top:811px;width:23px;height:21px;box-shadow:inset 1px 1px 0 #808080,inset -1px -1px 0 #fff"></div>
<span class="t" style="left:1804px;top:813px;font-size:17px;line-height:20px;color:#2a9d80;font-weight:bold;">B</span>
<svg style="left:1826px;top:814px" width="16" height="16" viewBox="0 0 16 16"><path d="M1 1.5h14l-5.5 6.5v7.5h-3v-7.5z" fill="#2a9d80"/><path d="M4 3.5h8l-4 4.5z" fill="#e9e7e3"/></svg>
<svg style="left:1852px;top:816px" width="40" height="14" viewBox="0 0 40 14"><rect x="0.5" y="1.5" width="9" height="3" fill="#fff" stroke="#222"/><rect x="23.5" y="1.5" width="9" height="9" fill="#fff" stroke="#222"/><path d="M23 3.5h10" stroke="#222"/></svg>
<div style="left:1472px;top:842px;width:419px;height:20px;box-shadow:inset 1px 1px 0 #808080,inset 2px 2px 0 #404040,inset -1px -1px 0 #e0ddd6;background:#fff"></div>
<span class="t" style="left:1476px;top:845px;color:#9a9a9a;letter-spacing:0.082px;">type filter text</span>
<div class="hd" style="left:1472px;top:869px;width:100px;height:22px;"></div>
<span class="t" style="left:1478px;top:872px;transform-origin:0 50%;transform:scaleX(0.8938);">Level</span>
<div class="hd" style="left:1572px;top:869px;width:200px;height:22px;"></div>
<span class="t" style="left:1578px;top:872px;transform-origin:0 50%;transform:scaleX(0.9723);">Issue</span>
<div class="hd" style="left:1772px;top:869px;width:120px;height:22px;"></div>
<span class="t" style="left:1778px;top:872px;transform-origin:0 50%;transform:scaleX(0.9072);">Origin</span>
<svg style="left:1518px;top:878px" width="10" height="6"><path d="M0 0h10l-5 5.5z" fill="#9a968e"/></svg>
<div style="left:1472px;top:910px;width:420px;height:1px;background:#d9d5cc"></div>
<div style="left:1472px;top:930px;width:420px;height:1px;background:#d9d5cc"></div>
<div style="left:1472px;top:950px;width:420px;height:1px;background:#d9d5cc"></div>
<div style="left:1472px;top:970px;width:420px;height:1px;background:#d9d5cc"></div>
<div style="left:1472px;top:990px;width:420px;height:1px;background:#d9d5cc"></div>
<div style="left:1472px;top:1010px;width:420px;height:1px;background:#d9d5cc"></div>
<div style="left:1571px;top:891px;width:1px;height:135px;background:#d9d5cc"></div>
<div style="left:1771px;top:891px;width:1px;height:135px;background:#d9d5cc"></div>
<span class="t" style="left:1498px;top:891px;font-size:16px;line-height:18px;color:#3a5fb4;font-weight:bold;font-family:&quot;Liberation Serif&quot;,serif">i</span>
<span class="t" style="left:1516px;top:893px;letter-spacing:0.335px;width:55.5px;overflow:hidden;">Information</span>
<span class="t" style="left:1577px;top:893px;">No toolchain project detected</span>
<div class="trk" style="left:1472px;top:1026px;width:420px;height:20px;"></div>
<div class="btn" style="left:1472px;top:1026px;width:20px;height:20px;"></div>
<div class="btn" style="left:1872px;top:1026px;width:20px;height:20px;"></div>
<div class="btn" style="left:1492px;top:1026px;width:145px;height:20px;"></div>
<svg style="left:1478px;top:1031px" width="6" height="10"><path d="M5.5 0v10l-5.5-5z" fill="#000"/></svg>
<svg style="left:1879px;top:1031px" width="6" height="10"><path d="M0 0v10l5.5-5z" fill="#000"/></svg>
<div style="left:749px;top:304px;width:430px;height:355px;background:#d4d0c8;box-shadow:inset -1px -1px 0 #404040,inset 1px 1px 0 #d4d0c8,inset -2px -2px 0 #808080,inset 2px 2px 0 #fff"></div>
<div style="left:753px;top:308px;width:423px;height:22px;background:linear-gradient(to right,#808080 0%,#8c8c8c 30%,#b0b0b0 75%,#c0c0c0 100%)"></div>
<svg style="left:755px;top:309.5px" width="19" height="19" viewBox="0 0 19 19"><rect x="0.5" y="0.5" width="18" height="18" rx="3" fill="#6a998c" stroke="#2b705f"/><path d="M4.5 4 L14.5 15 M14.5 4 L4.5 15" stroke="#14584a" stroke-width="3.2" fill="none"/></svg>
<span class="t" style="left:778px;top:312px;color:#d4d0c8;font-weight:bold;letter-spacing:0.625px;">Pin [20]</span>
<div class="btn" style="left:1108px;top:310px;width:20px;height:19px;"></div>
<div class="btn" style="left:1129px;top:310px;width:21px;height:19px;"></div>
<div class="btn" style="left:1152px;top:310px;width:20px;height:19px;"></div>
<svg style="left:1108px;top:310.5px" width="66" height="18" viewBox="0 0 66 18"><rect x="5" y="13" width="7" height="2" fill="#000" opacity=".5"/><path d="M25.5 4.5h10v9h-10z M25.5 5.5h10" stroke="#000" fill="none" stroke-width="1.4"/><path d="M49 5l8 8 M57 5l-8 8" stroke="#000" stroke-width="1.8" fill="none"/></svg>
<span class="t" style="left:758px;top:338px;transform-origin:0 50%;transform:scaleX(0.9615);">All signals on pin [20]:</span>
<div class="sunk" style="left:758px;top:359px;width:412px;height:233px;"></div>
<div style="left:765px;top:363px;width:17px;height:17px;background:#00ff00;border:1px solid #000"></div>
<svg style="left:766px;top:363px" width="17" height="17" viewBox="0 0 17 17"><path d="M2.5 8 L6.5 13 L15 2.5" stroke="#000" stroke-width="2.6" fill="none"/></svg>
<span class="t" style="left:787px;top:364px;transform-origin:0 50%;transform:scaleX(0.9623);">ADC0_0 (ADC0,CH,0)</span>
<div style="left:765px;top:384px;width:17px;height:17px;background:#f0f0f0;border:1px solid #8e8f8f"></div>
<span class="t" style="left:787px;top:385px;transform-origin:0 50%;transform:scaleX(0.9325);">CTIMER1_MAT2 (CTIMER1,MATCH,2)</span>
<div style="left:765px;top:405px;width:17px;height:17px;background:#f0f0f0;border:1px solid #8e8f8f"></div>
<span class="t" style="left:787px;top:406px;transform-origin:0 50%;transform:scaleX(0.9325);">CTIMER3_MAT3 (CTIMER3,MATCH,3)</span>
<div style="left:765px;top:426px;width:17px;height:17px;background:#f0f0f0;border:1px solid #8e8f8f"></div>
<span class="t" style="left:787px;top:427px;transform-origin:0 50%;transform:scaleX(0.9153);">FC0_CTS_SDA_SSEL0 (FLEXCOMM0,CTS_SDA_SSEL0)</span>
<div style="left:765px;top:447px;width:17px;height:17px;background:#f0f0f0;border:1px solid #8e8f8f"></div>
<span class="t" style="left:787px;top:448px;transform-origin:0 50%;transform:scaleX(0.8961);">MCLK (SYSCON,MCLK)</span>
<div style="left:765px;top:468px;width:17px;height:17px;background:#f0f0f0;border:1px solid #8e8f8f"></div>
<span class="t" style="left:787px;top:469px;transform-origin:0 50%;transform:scaleX(0.9592);">PIO0_23 (DMA0,TRIG,0)</span>
<div style="left:765px;top:489px;width:17px;height:17px;background:#f0f0f0;border:1px solid #8e8f8f"></div>
<span class="t" style="left:787px;top:490px;transform-origin:0 50%;transform:scaleX(0.9592);">PIO0_23 (DMA0,TRIG,1)</span>
<div style="left:765px;top:510px;width:17px;height:17px;background:#f0f0f0;border:1px solid #8e8f8f"></div>
<span class="t" style="left:787px;top:511px;transform-origin:0 50%;transform:scaleX(0.9627);">PIO0_23 (DMA0,TRIG,10)</span>
<div style="left:765px;top:531px;width:17px;height:17px;background:#f0f0f0;border:1px solid #8e8f8f"></div>
<span class="t" style="left:787px;top:532px;transform-origin:0 50%;transform:scaleX(0.9686);">PIO0_23 (DMA0,TRIG,11)</span>
<div style="left:765px;top:552px;width:17px;height:17px;background:#f0f0f0;border:1px solid #8e8f8f"></div>
<span class="t" style="left:787px;top:553px;transform-origin:0 50%;transform:scaleX(0.9627);">PIO0_23 (DMA0,TRIG,12)</span>
<div style="left:765px;top:573px;width:17px;height:17px;background:#f0f0f0;border:1px solid #8e8f8f"></div>
<span class="t" style="left:787px;top:574px;transform-origin:0 50%;transform:scaleX(0.9627);">PIO0_23 (DMA0,TRIG,13)</span>
<div class="trk" style="left:1148px;top:361px;width:20px;height:229px;"></div>
<div class="btn" style="left:1148px;top:361px;width:20px;height:20px;"></div>
<div class="btn" style="left:1148px;top:570px;width:20px;height:20px;"></div>
<div class="btn" style="left:1148px;top:381px;width:20px;height:37px;"></div>
<svg style="left:1153px;top:368px" width="10" height="6"><path d="M5 0l5 5.5h-10z" fill="#000"/></svg>
<svg style="left:1153px;top:578px" width="10" height="6"><path d="M0 0h10l-5 5.5z" fill="#000"/></svg>
<div class="btn" style="left:1072px;top:613px;width:93px;height:27px;"></div>
<span class="t" style="left:1101px;top:618px;transform-origin:0 50%;transform:scaleX(0.9469);">Done</span>
<svg style="left:0;top:0" width="1924" height="1080" viewBox="0 0 1924 1080"><line x1="322" y1="88.8" x2="104.5" y2="88.8" stroke="#ed1c24" stroke-width="3" stroke-linecap="round"/><polygon points="88,88.8 105.5,81.0 105.5,96.6" fill="#ed1c24"/><line x1="686" y1="114.8" x2="339.5" y2="116.6" stroke="#ed1c24" stroke-width="2.6" stroke-linecap="round"/><polygon points="323,116.7 340.5,108.8 340.5,124.4" fill="#ed1c24"/><line x1="257" y1="435" x2="161.7" y2="294.0" stroke="#ed1c24" stroke-width="2.6" stroke-linecap="round"/><polygon points="152.5,280.3 168.8,290.4 155.8,299.2" fill="#ed1c24"/><line x1="1241.7" y1="356.6" x2="939.5" y2="370.8" stroke="#ed1c24" stroke-width="2.6" stroke-linecap="round"/><polygon points="923,371.6 940.1,363.0 940.8,378.6" fill="#ed1c24"/><line x1="756.5" y1="918.2" x2="444.5" y2="872.8" stroke="#ed1c24" stroke-width="2.6" stroke-linecap="round"/><polygon points="428.2,870.4 446.6,865.2 444.4,880.6" fill="#ed1c24"/><line x1="1468.7" y1="428.3" x2="1796.5" y2="388.9" stroke="#ed1c24" stroke-width="2.6" stroke-linecap="round"/><polygon points="1812.9,386.9 1796.5,396.7 1794.6,381.2" fill="#ed1c24"/><line x1="1575.6" y1="22.2" x2="1813.4" y2="104.4" stroke="#ed1c24" stroke-width="3" stroke-linecap="round"/><polygon points="1829,109.8 1809.9,111.5 1815.0,96.7" fill="#ed1c24"/></svg>
<span class="red" style="left:119.8px;top:61.2px;height:30px;line-height:30px;font-size:21px;font-weight:300;letter-spacing:1.70px;transform-origin:0 50%;transform:rotate(0deg)"><span style="position:static;font-size:21px;letter-spacing:0;font-weight:normal;font-weight:bold;">1.</span><span style="position:static;display:inline-block;width:12.5px"></span>切换到引脚视图</span>
<span class="red" style="left:387.5px;top:88.2px;height:30px;line-height:30px;font-size:21px;font-weight:300;letter-spacing:1.10px;transform-origin:0 50%;transform:rotate(0deg)"><span style="position:static;font-size:22px;letter-spacing:0;font-weight:normal;">2.</span><span style="position:static;display:inline-block;width:7.7px"></span>搜索 功能或者引脚编号</span>
<span class="red" style="left:186.6px;top:296.2px;height:30px;line-height:30px;font-size:21px;font-weight:300;letter-spacing:1.10px;transform-origin:0 50%;transform:rotate(55.5deg)"><span style="position:static;font-size:22px;letter-spacing:0;font-weight:normal;">3.</span><span style="position:static;display:inline-block;width:9.2px"></span>选中引脚</span>
<span class="red" style="left:969.0px;top:341.0px;height:30px;line-height:30px;font-size:21px;font-weight:300;letter-spacing:0.95px;transform-origin:0 50%;transform:rotate(-2.35deg)"><span style="position:static;font-size:22px;letter-spacing:0;font-weight:normal;">4.</span><span style="position:static;display:inline-block;width:7.8px"></span>选择引脚的功能并选中</span>
<span class="red" style="left:504.5px;top:854.2px;height:30px;line-height:30px;font-size:21px;font-weight:300;letter-spacing:0.90px;transform-origin:0 50%;transform:rotate(8.2deg)"><span style="position:static;font-size:22px;letter-spacing:0;font-weight:normal;">5.</span><span style="position:static;display:inline-block;width:7.9px"></span>查看引脚配置选项</span>
<span class="red" style="left:1521.6px;top:393.1px;height:30px;line-height:30px;font-size:21px;font-weight:300;letter-spacing:0.80px;transform-origin:0 50%;transform:rotate(-6.3deg)"><span style="position:static;font-size:22px;letter-spacing:0;font-weight:normal;">6.</span><span style="position:static;display:inline-block;width:7.9px"></span>查看自动生成的代码</span>
<span class="red" style="left:1646.7px;top:18.9px;height:30px;line-height:30px;font-size:21px;font-weight:300;letter-spacing:1.00px;transform-origin:0 50%;transform:rotate(19.3deg)"><span style="position:static;font-size:22px;letter-spacing:0;font-weight:normal;">7.</span><span style="position:static;display:inline-block;width:7.9px"></span>导出代码</span>
</body></html>
